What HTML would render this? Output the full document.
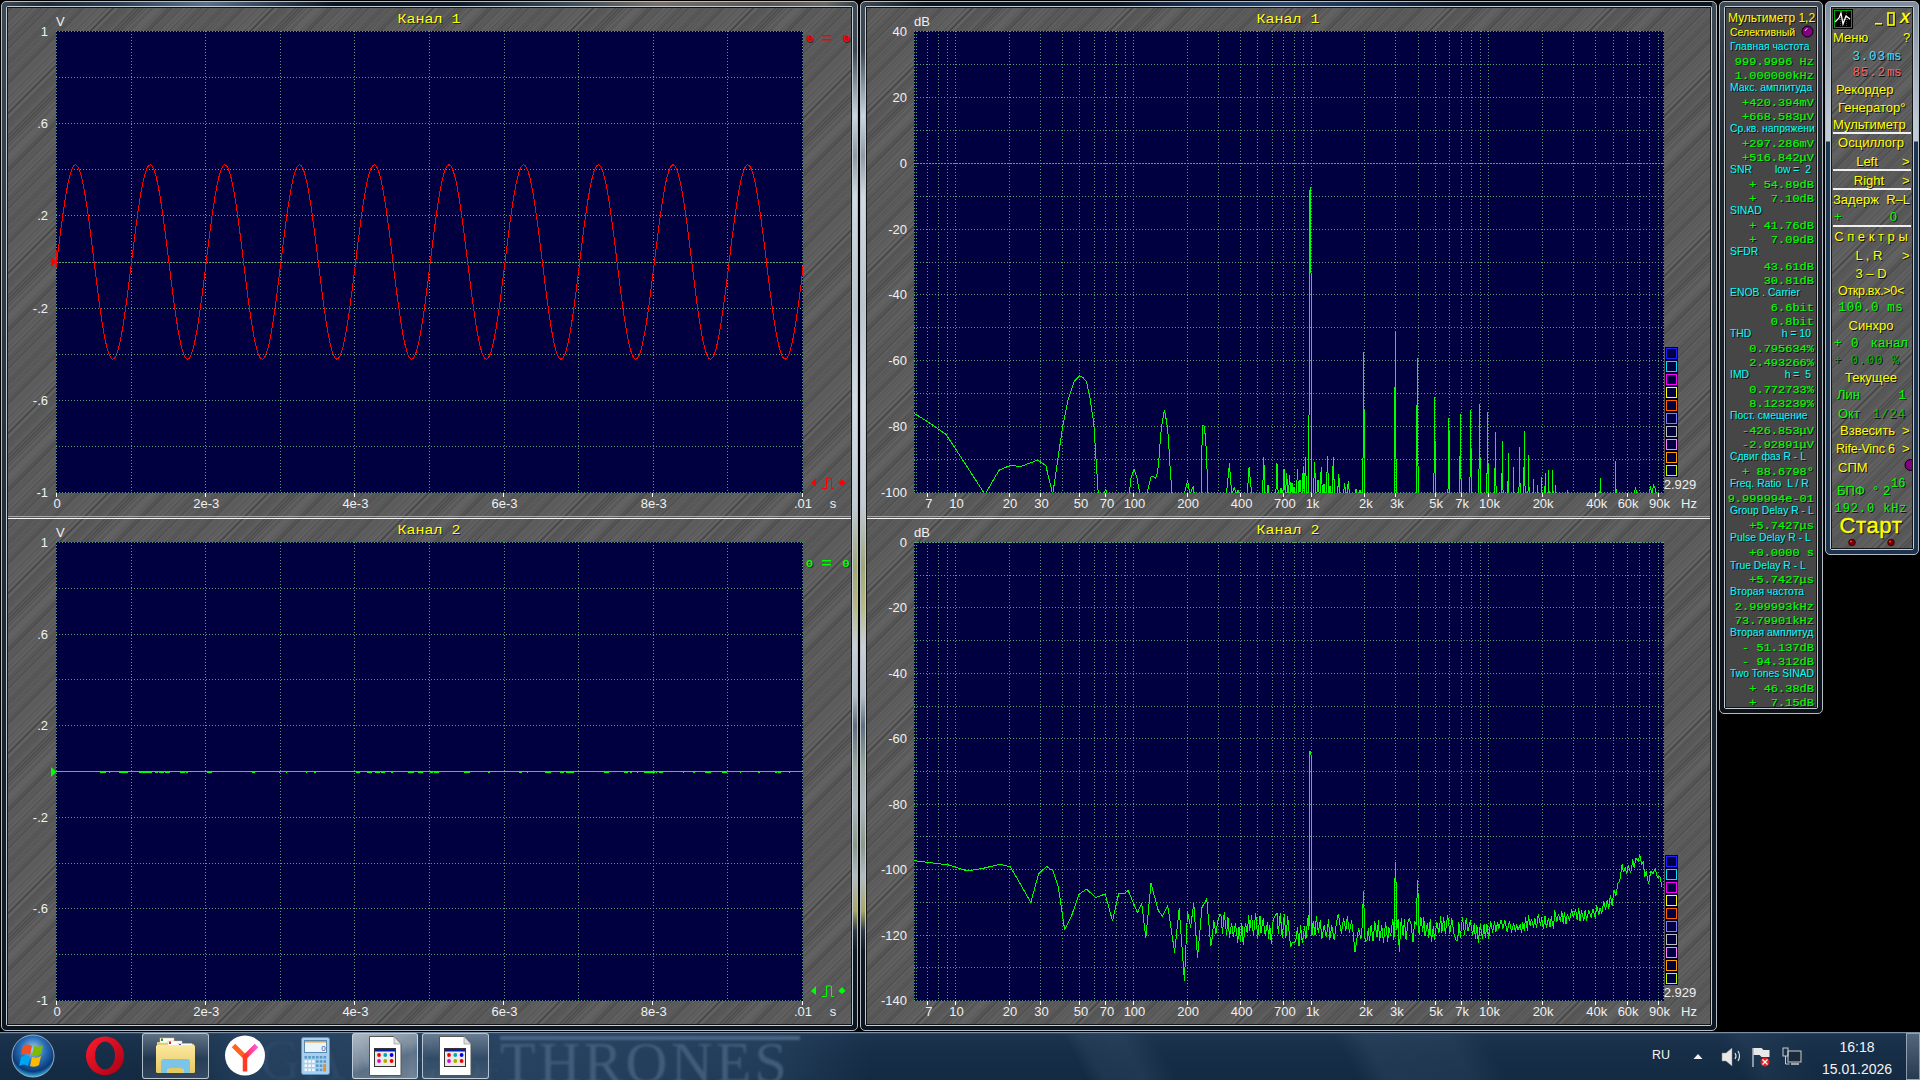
<!DOCTYPE html><html><head><meta charset="utf-8"><style>

*{margin:0;padding:0}
html,body{width:1920px;height:1080px;overflow:hidden;background:#000;position:relative}
.tex,.flat{position:absolute}
.tex{background-color:#5a5a5a;
background-image:
repeating-linear-gradient(135deg, rgba(0,0,0,.14) 0 1px, rgba(0,0,0,0) 1px 5px, rgba(255,255,255,.05) 5px 6px, rgba(0,0,0,0) 6px 11px, rgba(0,0,0,.09) 11px 12px, rgba(0,0,0,0) 12px 19px, rgba(255,255,255,.05) 19px 20px, rgba(0,0,0,0) 20px 23px, rgba(0,0,0,.06) 23px 24px, rgba(0,0,0,0) 24px 29px),
repeating-linear-gradient(135deg, rgba(0,0,0,.10) 0 1px, rgba(0,0,0,0) 1px 13px, rgba(0,0,0,.06) 13px 14px, rgba(0,0,0,0) 14px 31px, rgba(255,255,255,.04) 31px 32px, rgba(0,0,0,0) 32px 41px),
repeating-linear-gradient(135deg, rgba(0,0,0,.05) 0 1px, rgba(0,0,0,0) 1px 3px);}
.flat{background:#464646}
svg{position:absolute;left:0;top:0}
text{white-space:pre}

</style></head><body>
<svg width="0" height="0" style="position:absolute"><defs><pattern id="brush" x="0" y="0" width="160" height="160" patternUnits="userSpaceOnUse"><rect width="160" height="160" fill="#5b5b5b"/><line x1="0.0" y1="0" x2="0" y2="0.0" stroke="#000" stroke-opacity="0.111" stroke-width="1.2"/><line x1="160.0" y1="0" x2="0" y2="160.0" stroke="#000" stroke-opacity="0.111" stroke-width="1.2"/><line x1="2.2" y1="0" x2="0" y2="2.2" stroke="#000" stroke-opacity="0.119" stroke-width="1.0"/><line x1="162.2" y1="0" x2="0" y2="162.2" stroke="#000" stroke-opacity="0.119" stroke-width="1.0"/><line x1="3.8" y1="0" x2="0" y2="3.8" stroke="#000" stroke-opacity="0.169" stroke-width="1.2"/><line x1="163.8" y1="0" x2="0" y2="163.8" stroke="#000" stroke-opacity="0.169" stroke-width="1.2"/><line x1="6.0" y1="0" x2="0" y2="6.0" stroke="#fff" stroke-opacity="0.028" stroke-width="0.7"/><line x1="166.0" y1="0" x2="0" y2="166.0" stroke="#fff" stroke-opacity="0.028" stroke-width="0.7"/><line x1="9.2" y1="0" x2="0" y2="9.2" stroke="#000" stroke-opacity="0.136" stroke-width="0.5"/><line x1="169.2" y1="0" x2="0" y2="169.2" stroke="#000" stroke-opacity="0.136" stroke-width="0.5"/><line x1="10.5" y1="0" x2="0" y2="10.5" stroke="#fff" stroke-opacity="0.022" stroke-width="0.5"/><line x1="170.5" y1="0" x2="0" y2="170.5" stroke="#fff" stroke-opacity="0.022" stroke-width="0.5"/><line x1="13.7" y1="0" x2="0" y2="13.7" stroke="#000" stroke-opacity="0.117" stroke-width="1.0"/><line x1="173.7" y1="0" x2="0" y2="173.7" stroke="#000" stroke-opacity="0.117" stroke-width="1.0"/><line x1="16.5" y1="0" x2="0" y2="16.5" stroke="#fff" stroke-opacity="0.042" stroke-width="1.2"/><line x1="176.5" y1="0" x2="0" y2="176.5" stroke="#fff" stroke-opacity="0.042" stroke-width="1.2"/><line x1="18.6" y1="0" x2="0" y2="18.6" stroke="#fff" stroke-opacity="0.068" stroke-width="0.5"/><line x1="178.6" y1="0" x2="0" y2="178.6" stroke="#fff" stroke-opacity="0.068" stroke-width="0.5"/><line x1="19.6" y1="0" x2="0" y2="19.6" stroke="#000" stroke-opacity="0.074" stroke-width="0.9"/><line x1="179.6" y1="0" x2="0" y2="179.6" stroke="#000" stroke-opacity="0.074" stroke-width="0.9"/><line x1="21.6" y1="0" x2="0" y2="21.6" stroke="#fff" stroke-opacity="0.052" stroke-width="1.2"/><line x1="181.6" y1="0" x2="0" y2="181.6" stroke="#fff" stroke-opacity="0.052" stroke-width="1.2"/><line x1="24.1" y1="0" x2="0" y2="24.1" stroke="#000" stroke-opacity="0.158" stroke-width="0.5"/><line x1="184.1" y1="0" x2="0" y2="184.1" stroke="#000" stroke-opacity="0.158" stroke-width="0.5"/><line x1="27.3" y1="0" x2="0" y2="27.3" stroke="#fff" stroke-opacity="0.057" stroke-width="0.7"/><line x1="187.3" y1="0" x2="0" y2="187.3" stroke="#fff" stroke-opacity="0.057" stroke-width="0.7"/><line x1="30.1" y1="0" x2="0" y2="30.1" stroke="#000" stroke-opacity="0.110" stroke-width="0.5"/><line x1="190.1" y1="0" x2="0" y2="190.1" stroke="#000" stroke-opacity="0.110" stroke-width="0.5"/><line x1="32.9" y1="0" x2="0" y2="32.9" stroke="#000" stroke-opacity="0.148" stroke-width="0.9"/><line x1="192.9" y1="0" x2="0" y2="192.9" stroke="#000" stroke-opacity="0.148" stroke-width="0.9"/><line x1="34.2" y1="0" x2="0" y2="34.2" stroke="#000" stroke-opacity="0.123" stroke-width="0.9"/><line x1="194.2" y1="0" x2="0" y2="194.2" stroke="#000" stroke-opacity="0.123" stroke-width="0.9"/><line x1="37.2" y1="0" x2="0" y2="37.2" stroke="#000" stroke-opacity="0.060" stroke-width="1.0"/><line x1="197.2" y1="0" x2="0" y2="197.2" stroke="#000" stroke-opacity="0.060" stroke-width="1.0"/><line x1="40.5" y1="0" x2="0" y2="40.5" stroke="#000" stroke-opacity="0.272" stroke-width="0.9"/><line x1="200.5" y1="0" x2="0" y2="200.5" stroke="#000" stroke-opacity="0.272" stroke-width="0.9"/><line x1="42.9" y1="0" x2="0" y2="42.9" stroke="#fff" stroke-opacity="0.035" stroke-width="0.7"/><line x1="202.9" y1="0" x2="0" y2="202.9" stroke="#fff" stroke-opacity="0.035" stroke-width="0.7"/><line x1="46.5" y1="0" x2="0" y2="46.5" stroke="#000" stroke-opacity="0.050" stroke-width="0.5"/><line x1="206.5" y1="0" x2="0" y2="206.5" stroke="#000" stroke-opacity="0.050" stroke-width="0.5"/><line x1="49.9" y1="0" x2="0" y2="49.9" stroke="#fff" stroke-opacity="0.036" stroke-width="0.9"/><line x1="209.9" y1="0" x2="0" y2="209.9" stroke="#fff" stroke-opacity="0.036" stroke-width="0.9"/><line x1="51.3" y1="0" x2="0" y2="51.3" stroke="#000" stroke-opacity="0.153" stroke-width="0.7"/><line x1="211.3" y1="0" x2="0" y2="211.3" stroke="#000" stroke-opacity="0.153" stroke-width="0.7"/><line x1="54.6" y1="0" x2="0" y2="54.6" stroke="#000" stroke-opacity="0.100" stroke-width="1.2"/><line x1="214.6" y1="0" x2="0" y2="214.6" stroke="#000" stroke-opacity="0.100" stroke-width="1.2"/><line x1="57.3" y1="0" x2="0" y2="57.3" stroke="#000" stroke-opacity="0.166" stroke-width="0.9"/><line x1="217.3" y1="0" x2="0" y2="217.3" stroke="#000" stroke-opacity="0.166" stroke-width="0.9"/><line x1="59.4" y1="0" x2="0" y2="59.4" stroke="#fff" stroke-opacity="0.033" stroke-width="0.9"/><line x1="219.4" y1="0" x2="0" y2="219.4" stroke="#fff" stroke-opacity="0.033" stroke-width="0.9"/><line x1="61.5" y1="0" x2="0" y2="61.5" stroke="#000" stroke-opacity="0.079" stroke-width="1.0"/><line x1="221.5" y1="0" x2="0" y2="221.5" stroke="#000" stroke-opacity="0.079" stroke-width="1.0"/><line x1="65.0" y1="0" x2="0" y2="65.0" stroke="#000" stroke-opacity="0.089" stroke-width="0.7"/><line x1="225.0" y1="0" x2="0" y2="225.0" stroke="#000" stroke-opacity="0.089" stroke-width="0.7"/><line x1="66.1" y1="0" x2="0" y2="66.1" stroke="#fff" stroke-opacity="0.046" stroke-width="0.9"/><line x1="226.1" y1="0" x2="0" y2="226.1" stroke="#fff" stroke-opacity="0.046" stroke-width="0.9"/><line x1="68.6" y1="0" x2="0" y2="68.6" stroke="#000" stroke-opacity="0.104" stroke-width="0.5"/><line x1="228.6" y1="0" x2="0" y2="228.6" stroke="#000" stroke-opacity="0.104" stroke-width="0.5"/><line x1="72.1" y1="0" x2="0" y2="72.1" stroke="#000" stroke-opacity="0.099" stroke-width="0.9"/><line x1="232.1" y1="0" x2="0" y2="232.1" stroke="#000" stroke-opacity="0.099" stroke-width="0.9"/><line x1="73.5" y1="0" x2="0" y2="73.5" stroke="#000" stroke-opacity="0.139" stroke-width="0.9"/><line x1="233.5" y1="0" x2="0" y2="233.5" stroke="#000" stroke-opacity="0.139" stroke-width="0.9"/><line x1="75.2" y1="0" x2="0" y2="75.2" stroke="#000" stroke-opacity="0.257" stroke-width="0.7"/><line x1="235.2" y1="0" x2="0" y2="235.2" stroke="#000" stroke-opacity="0.257" stroke-width="0.7"/><line x1="77.0" y1="0" x2="0" y2="77.0" stroke="#000" stroke-opacity="0.144" stroke-width="0.7"/><line x1="237.0" y1="0" x2="0" y2="237.0" stroke="#000" stroke-opacity="0.144" stroke-width="0.7"/><line x1="79.7" y1="0" x2="0" y2="79.7" stroke="#fff" stroke-opacity="0.025" stroke-width="1.2"/><line x1="239.7" y1="0" x2="0" y2="239.7" stroke="#fff" stroke-opacity="0.025" stroke-width="1.2"/><line x1="81.5" y1="0" x2="0" y2="81.5" stroke="#000" stroke-opacity="0.148" stroke-width="0.7"/><line x1="241.5" y1="0" x2="0" y2="241.5" stroke="#000" stroke-opacity="0.148" stroke-width="0.7"/><line x1="82.6" y1="0" x2="0" y2="82.6" stroke="#fff" stroke-opacity="0.032" stroke-width="1.2"/><line x1="242.6" y1="0" x2="0" y2="242.6" stroke="#fff" stroke-opacity="0.032" stroke-width="1.2"/><line x1="84.7" y1="0" x2="0" y2="84.7" stroke="#000" stroke-opacity="0.056" stroke-width="0.7"/><line x1="244.7" y1="0" x2="0" y2="244.7" stroke="#000" stroke-opacity="0.056" stroke-width="0.7"/><line x1="86.4" y1="0" x2="0" y2="86.4" stroke="#fff" stroke-opacity="0.052" stroke-width="0.9"/><line x1="246.4" y1="0" x2="0" y2="246.4" stroke="#fff" stroke-opacity="0.052" stroke-width="0.9"/><line x1="88.3" y1="0" x2="0" y2="88.3" stroke="#fff" stroke-opacity="0.025" stroke-width="1.2"/><line x1="248.3" y1="0" x2="0" y2="248.3" stroke="#fff" stroke-opacity="0.025" stroke-width="1.2"/><line x1="90.1" y1="0" x2="0" y2="90.1" stroke="#000" stroke-opacity="0.078" stroke-width="0.9"/><line x1="250.1" y1="0" x2="0" y2="250.1" stroke="#000" stroke-opacity="0.078" stroke-width="0.9"/><line x1="92.2" y1="0" x2="0" y2="92.2" stroke="#fff" stroke-opacity="0.036" stroke-width="1.2"/><line x1="252.2" y1="0" x2="0" y2="252.2" stroke="#fff" stroke-opacity="0.036" stroke-width="1.2"/><line x1="94.3" y1="0" x2="0" y2="94.3" stroke="#fff" stroke-opacity="0.029" stroke-width="0.5"/><line x1="254.3" y1="0" x2="0" y2="254.3" stroke="#fff" stroke-opacity="0.029" stroke-width="0.5"/><line x1="96.4" y1="0" x2="0" y2="96.4" stroke="#fff" stroke-opacity="0.054" stroke-width="1.2"/><line x1="256.4" y1="0" x2="0" y2="256.4" stroke="#fff" stroke-opacity="0.054" stroke-width="1.2"/><line x1="98.5" y1="0" x2="0" y2="98.5" stroke="#fff" stroke-opacity="0.071" stroke-width="0.7"/><line x1="258.5" y1="0" x2="0" y2="258.5" stroke="#fff" stroke-opacity="0.071" stroke-width="0.7"/><line x1="99.5" y1="0" x2="0" y2="99.5" stroke="#000" stroke-opacity="0.138" stroke-width="0.9"/><line x1="259.5" y1="0" x2="0" y2="259.5" stroke="#000" stroke-opacity="0.138" stroke-width="0.9"/><line x1="101.9" y1="0" x2="0" y2="101.9" stroke="#fff" stroke-opacity="0.067" stroke-width="1.2"/><line x1="261.9" y1="0" x2="0" y2="261.9" stroke="#fff" stroke-opacity="0.067" stroke-width="1.2"/><line x1="105.4" y1="0" x2="0" y2="105.4" stroke="#000" stroke-opacity="0.280" stroke-width="1.2"/><line x1="265.4" y1="0" x2="0" y2="265.4" stroke="#000" stroke-opacity="0.280" stroke-width="1.2"/><line x1="108.8" y1="0" x2="0" y2="108.8" stroke="#fff" stroke-opacity="0.069" stroke-width="1.2"/><line x1="268.8" y1="0" x2="0" y2="268.8" stroke="#fff" stroke-opacity="0.069" stroke-width="1.2"/><line x1="109.8" y1="0" x2="0" y2="109.8" stroke="#000" stroke-opacity="0.056" stroke-width="0.7"/><line x1="269.8" y1="0" x2="0" y2="269.8" stroke="#000" stroke-opacity="0.056" stroke-width="0.7"/><line x1="112.5" y1="0" x2="0" y2="112.5" stroke="#000" stroke-opacity="0.094" stroke-width="1.2"/><line x1="272.5" y1="0" x2="0" y2="272.5" stroke="#000" stroke-opacity="0.094" stroke-width="1.2"/><line x1="113.7" y1="0" x2="0" y2="113.7" stroke="#000" stroke-opacity="0.166" stroke-width="0.5"/><line x1="273.7" y1="0" x2="0" y2="273.7" stroke="#000" stroke-opacity="0.166" stroke-width="0.5"/><line x1="115.6" y1="0" x2="0" y2="115.6" stroke="#000" stroke-opacity="0.110" stroke-width="0.7"/><line x1="275.6" y1="0" x2="0" y2="275.6" stroke="#000" stroke-opacity="0.110" stroke-width="0.7"/><line x1="117.1" y1="0" x2="0" y2="117.1" stroke="#000" stroke-opacity="0.156" stroke-width="0.5"/><line x1="277.1" y1="0" x2="0" y2="277.1" stroke="#000" stroke-opacity="0.156" stroke-width="0.5"/><line x1="119.3" y1="0" x2="0" y2="119.3" stroke="#000" stroke-opacity="0.092" stroke-width="0.7"/><line x1="279.3" y1="0" x2="0" y2="279.3" stroke="#000" stroke-opacity="0.092" stroke-width="0.7"/><line x1="121.0" y1="0" x2="0" y2="121.0" stroke="#000" stroke-opacity="0.095" stroke-width="0.5"/><line x1="281.0" y1="0" x2="0" y2="281.0" stroke="#000" stroke-opacity="0.095" stroke-width="0.5"/><line x1="124.2" y1="0" x2="0" y2="124.2" stroke="#fff" stroke-opacity="0.023" stroke-width="0.5"/><line x1="284.2" y1="0" x2="0" y2="284.2" stroke="#fff" stroke-opacity="0.023" stroke-width="0.5"/><line x1="125.3" y1="0" x2="0" y2="125.3" stroke="#fff" stroke-opacity="0.067" stroke-width="0.5"/><line x1="285.3" y1="0" x2="0" y2="285.3" stroke="#fff" stroke-opacity="0.067" stroke-width="0.5"/><line x1="127.5" y1="0" x2="0" y2="127.5" stroke="#000" stroke-opacity="0.239" stroke-width="1.0"/><line x1="287.5" y1="0" x2="0" y2="287.5" stroke="#000" stroke-opacity="0.239" stroke-width="1.0"/><line x1="130.0" y1="0" x2="0" y2="130.0" stroke="#000" stroke-opacity="0.065" stroke-width="0.5"/><line x1="290.0" y1="0" x2="0" y2="290.0" stroke="#000" stroke-opacity="0.065" stroke-width="0.5"/><line x1="131.3" y1="0" x2="0" y2="131.3" stroke="#000" stroke-opacity="0.134" stroke-width="1.2"/><line x1="291.3" y1="0" x2="0" y2="291.3" stroke="#000" stroke-opacity="0.134" stroke-width="1.2"/><line x1="132.7" y1="0" x2="0" y2="132.7" stroke="#000" stroke-opacity="0.119" stroke-width="1.0"/><line x1="292.7" y1="0" x2="0" y2="292.7" stroke="#000" stroke-opacity="0.119" stroke-width="1.0"/><line x1="135.3" y1="0" x2="0" y2="135.3" stroke="#000" stroke-opacity="0.263" stroke-width="0.9"/><line x1="295.3" y1="0" x2="0" y2="295.3" stroke="#000" stroke-opacity="0.263" stroke-width="0.9"/><line x1="137.3" y1="0" x2="0" y2="137.3" stroke="#fff" stroke-opacity="0.045" stroke-width="0.7"/><line x1="297.3" y1="0" x2="0" y2="297.3" stroke="#fff" stroke-opacity="0.045" stroke-width="0.7"/><line x1="138.8" y1="0" x2="0" y2="138.8" stroke="#000" stroke-opacity="0.117" stroke-width="0.7"/><line x1="298.8" y1="0" x2="0" y2="298.8" stroke="#000" stroke-opacity="0.117" stroke-width="0.7"/><line x1="140.9" y1="0" x2="0" y2="140.9" stroke="#fff" stroke-opacity="0.072" stroke-width="0.9"/><line x1="300.9" y1="0" x2="0" y2="300.9" stroke="#fff" stroke-opacity="0.072" stroke-width="0.9"/><line x1="144.4" y1="0" x2="0" y2="144.4" stroke="#000" stroke-opacity="0.153" stroke-width="0.5"/><line x1="304.4" y1="0" x2="0" y2="304.4" stroke="#000" stroke-opacity="0.153" stroke-width="0.5"/><line x1="147.8" y1="0" x2="0" y2="147.8" stroke="#fff" stroke-opacity="0.067" stroke-width="1.2"/><line x1="307.8" y1="0" x2="0" y2="307.8" stroke="#fff" stroke-opacity="0.067" stroke-width="1.2"/><line x1="150.8" y1="0" x2="0" y2="150.8" stroke="#fff" stroke-opacity="0.060" stroke-width="1.2"/><line x1="310.8" y1="0" x2="0" y2="310.8" stroke="#fff" stroke-opacity="0.060" stroke-width="1.2"/><line x1="153.2" y1="0" x2="0" y2="153.2" stroke="#fff" stroke-opacity="0.059" stroke-width="1.0"/><line x1="313.2" y1="0" x2="0" y2="313.2" stroke="#fff" stroke-opacity="0.059" stroke-width="1.0"/><line x1="154.5" y1="0" x2="0" y2="154.5" stroke="#fff" stroke-opacity="0.022" stroke-width="0.5"/><line x1="314.5" y1="0" x2="0" y2="314.5" stroke="#fff" stroke-opacity="0.022" stroke-width="0.5"/><line x1="156.9" y1="0" x2="0" y2="156.9" stroke="#fff" stroke-opacity="0.041" stroke-width="0.5"/><line x1="316.9" y1="0" x2="0" y2="316.9" stroke="#fff" stroke-opacity="0.041" stroke-width="0.5"/><line x1="158.7" y1="0" x2="0" y2="158.7" stroke="#fff" stroke-opacity="0.021" stroke-width="0.5"/><line x1="318.7" y1="0" x2="0" y2="318.7" stroke="#fff" stroke-opacity="0.021" stroke-width="0.5"/></pattern></defs></svg>
<div style="position:absolute;left:1px;top:1px;width:857px;height:1030px;box-sizing:border-box;border:1px solid #b4bcc4;border-radius:5px;background:linear-gradient(180deg,#3c4854,#0c1622)"></div>
<div style="position:absolute;left:6px;top:6px;width:847px;height:1020px;box-sizing:border-box;border:1px solid #c4ccd4;border-radius:2px"></div>
<div style="position:absolute;left:7px;top:7px;width:845px;height:1018px;box-sizing:border-box;border:1px solid #141414;"></div>
<svg style="position:absolute;left:8px;top:8px" width="843" height="1016"><rect width="843" height="1016" fill="url(#brush)"/></svg>
<div style="position:absolute;left:860px;top:1px;width:857px;height:1030px;box-sizing:border-box;border:1px solid #b4bcc4;border-radius:5px;background:linear-gradient(180deg,#3c4854,#0c1622)"></div>
<div style="position:absolute;left:865px;top:6px;width:847px;height:1020px;box-sizing:border-box;border:1px solid #c4ccd4;border-radius:2px"></div>
<div style="position:absolute;left:866px;top:7px;width:845px;height:1018px;box-sizing:border-box;border:1px solid #141414;"></div>
<svg style="position:absolute;left:867px;top:8px" width="843" height="1016"><rect width="843" height="1016" fill="url(#brush)"/></svg>
<div style="position:absolute;left:1719px;top:1px;width:104px;height:713px;box-sizing:border-box;border:1px solid #b4bcc4;border-radius:5px;background:linear-gradient(180deg,#3c4854 0px,#2c3642 60px,#1e2630 150px,#161c24 400px,#0c1218 100%)"></div>
<div style="position:absolute;left:1724px;top:6px;width:94px;height:703px;box-sizing:border-box;border:1px solid #c4ccd4;border-radius:2px"></div>
<div style="position:absolute;left:1725px;top:7px;width:92px;height:701px;box-sizing:border-box;border:1px solid #141414;"></div>
<div class="flat" style="left:1726px;top:8px;width:90px;height:699px"></div>
<div style="position:absolute;left:1825px;top:1px;width:94px;height:554px;box-sizing:border-box;border:1px solid #b4bcc4;border-radius:5px;background:linear-gradient(180deg,#7c8c9c 0px,#9aa8b6 50px,#bcc8d4 120px,#c0ccd8 139px,#1e3652 140px,#1c3450 100%)"></div>
<div style="position:absolute;left:1830px;top:6px;width:84px;height:544px;box-sizing:border-box;border:1px solid #c4ccd4;border-radius:2px"></div>
<div style="position:absolute;left:1831px;top:7px;width:82px;height:542px;box-sizing:border-box;border:1px solid #141414;"></div>
<svg style="position:absolute;left:1832px;top:8px" width="80" height="540"><rect width="80" height="540" fill="url(#brush)"/></svg>
<div style="position:absolute;left:6px;top:2px;width:847px;height:4px;background:linear-gradient(90deg,#3a4550 0px,#1e2a36 40px,#2a3c50 110px,#5a7088 200px,#2a3c50 270px,#0a1420 330px,#0c1826 450px,#3a4a58 560px,#7a6e64 650px,#5a5450 760px,#6a6660 820px,#3a4550 847px)"></div>
<div style="position:absolute;left:865px;top:2px;width:847px;height:4px;background:linear-gradient(90deg,#3a4550 0px,#0c1622 60px,#0a1420 250px,#1a3050 330px,#28426a 420px,#1a3050 500px,#0a1420 600px,#0c1622 847px)"></div>
<div style="position:absolute;left:853px;top:6px;width:4px;height:1020px;background:linear-gradient(180deg,#3c4854 0px,#3c4854 45px,#8a98a6 80px,#c8d6e4 110px,#8e9aa6 150px,#d0dae4 190px,#b8c4ce 300px,#d4dde6 400px,#c0cad4 500px,#a0a878 560px,#b8b880 600px,#c8d0d8 640px,#b0bcc8 690px,#607080 720px,#98a8a0 760px,#aab6be 800px,#8a9a88 840px,#b0bcc4 870px,#a8a860 905px,#2a3848 925px,#101a26 945px,#0c1622 1030px)"></div>
<div style="position:absolute;left:861px;top:6px;width:4px;height:1020px;background:linear-gradient(180deg,#3c4854 0px,#3c4854 45px,#8a98a6 80px,#c8d6e4 110px,#8e9aa6 150px,#d0dae4 190px,#b8c4ce 300px,#d4dde6 400px,#c0cad4 500px,#a0a878 560px,#b8b880 600px,#c8d0d8 640px,#b0bcc8 690px,#607080 720px,#98a8a0 760px,#aab6be 800px,#8a9a88 840px,#b0bcc4 870px,#a8a860 905px,#2a3848 925px,#101a26 945px,#0c1622 1030px)"></div>
<div style="position:absolute;left:8px;top:516px;width:843px;height:1px;background:#a8a8a8"></div>
<div style="position:absolute;left:8px;top:518px;width:843px;height:1px;background:#f4f4f4"></div>
<div style="position:absolute;left:867px;top:516px;width:843px;height:1px;background:#a8a8a8"></div>
<div style="position:absolute;left:867px;top:518px;width:843px;height:1px;background:#f4f4f4"></div>
<div style="position:absolute;left:0;top:1032px;width:1920px;height:48px;background:linear-gradient(180deg,#1c344e 0%,#172e48 40%,#132a42 100%)"></div>
<div style="position:absolute;left:0;top:1034px;width:1920px;height:46px;background:linear-gradient(62deg,rgba(255,255,255,0) 0px,rgba(255,255,255,0) 960px,rgba(120,150,180,.10) 975px,rgba(120,150,180,.12) 1010px,rgba(255,255,255,0) 1040px,rgba(255,255,255,0) 1200px,rgba(120,150,180,.12) 1225px,rgba(120,150,180,.10) 1300px,rgba(255,255,255,0) 1330px,rgba(255,255,255,0) 1540px,rgba(120,150,180,.08) 1560px,rgba(255,255,255,0) 1610px)"></div>
<div style="position:absolute;left:0;top:1032px;width:1920px;height:1px;background:#7a8ea4"></div>
<div style="position:absolute;left:0;top:1033px;width:1920px;height:1px;background:#34485e"></div>
<div style="position:absolute;left:170px;top:1034px;width:700px;height:46px;background:linear-gradient(90deg,rgba(50,80,112,0) 0%,rgba(50,80,112,.55) 12%,rgba(50,80,112,.6) 50%,rgba(50,80,112,.45) 85%,rgba(50,80,112,0) 100%)"></div>
<div style="position:absolute;left:500px;top:1036px;width:300px;height:4px;background:#4a6684;filter:blur(1px)"></div>
<div style="position:absolute;left:190px;top:1034px;width:640px;height:46px;overflow:hidden;"><div style="position:absolute;left:310px;top:0px;font-family:'Liberation Serif',serif;font-size:58px;line-height:58px;color:#46627f;letter-spacing:3.2px;white-space:nowrap;filter:blur(0.8px);opacity:.85">THRONES</div><div style="position:absolute;left:70px;top:-2px;font-family:'Liberation Serif',serif;font-size:56px;line-height:56px;color:#2c4866;letter-spacing:4px;white-space:nowrap;filter:blur(0.9px)">GAME <span style="font-size:30px">OF</span></div></div>
<div style="position:absolute;left:142px;top:1033px;width:67px;height:46px;box-sizing:border-box;border:1px solid rgba(220,230,240,.75);border-radius:3px;background:linear-gradient(180deg,rgba(255,255,255,.30),rgba(255,255,255,.10) 45%,rgba(255,255,255,.05) 55%,rgba(255,255,255,.12))"></div>
<div style="position:absolute;left:352px;top:1033px;width:66px;height:46px;box-sizing:border-box;border:1px solid rgba(220,230,240,.75);border-radius:3px;background:linear-gradient(160deg,rgba(255,255,255,.62),rgba(255,255,255,.40) 45%,rgba(255,255,255,.25) 60%,rgba(255,255,255,.35))"></div>
<div style="position:absolute;left:422px;top:1033px;width:67px;height:46px;box-sizing:border-box;border:1px solid rgba(220,230,240,.75);border-radius:3px;background:linear-gradient(180deg,rgba(255,255,255,.30),rgba(255,255,255,.10) 45%,rgba(255,255,255,.05) 55%,rgba(255,255,255,.12))"></div>
<div style="position:absolute;left:1906px;top:1033px;width:14px;height:47px;box-sizing:border-box;border:1px solid rgba(200,210,220,.6);background:linear-gradient(180deg,rgba(255,255,255,.25),rgba(255,255,255,.08))"></div>
<svg width="1920" height="1080" viewBox="0 0 1920 1080">
<rect x="56" y="31" width="747" height="462" fill="#000040"/>
<line x1="56.5" y1="31" x2="56.5" y2="493" stroke="#58a074" stroke-width="1" stroke-dasharray="1 2"/>
<line x1="131.5" y1="31" x2="131.5" y2="493" stroke="#58a074" stroke-width="1" stroke-dasharray="1 2"/>
<line x1="205.5" y1="31" x2="205.5" y2="493" stroke="#58a074" stroke-width="1" stroke-dasharray="1 2"/>
<line x1="280.5" y1="31" x2="280.5" y2="493" stroke="#58a074" stroke-width="1" stroke-dasharray="1 2"/>
<line x1="354.5" y1="31" x2="354.5" y2="493" stroke="#58a074" stroke-width="1" stroke-dasharray="1 2"/>
<line x1="429.5" y1="31" x2="429.5" y2="493" stroke="#58a074" stroke-width="1" stroke-dasharray="1 2"/>
<line x1="504.5" y1="31" x2="504.5" y2="493" stroke="#58a074" stroke-width="1" stroke-dasharray="1 2"/>
<line x1="578.5" y1="31" x2="578.5" y2="493" stroke="#58a074" stroke-width="1" stroke-dasharray="1 2"/>
<line x1="653.5" y1="31" x2="653.5" y2="493" stroke="#58a074" stroke-width="1" stroke-dasharray="1 2"/>
<line x1="727.5" y1="31" x2="727.5" y2="493" stroke="#58a074" stroke-width="1" stroke-dasharray="1 2"/>
<line x1="802.5" y1="31" x2="802.5" y2="493" stroke="#58a074" stroke-width="1" stroke-dasharray="1 2"/>
<line x1="56" y1="31.5" x2="803" y2="31.5" stroke="#58a074" stroke-width="1" stroke-dasharray="1 2"/>
<line x1="56" y1="77.5" x2="803" y2="77.5" stroke="#58a074" stroke-width="1" stroke-dasharray="1 2"/>
<line x1="56" y1="123.5" x2="803" y2="123.5" stroke="#58a074" stroke-width="1" stroke-dasharray="1 2"/>
<line x1="56" y1="169.5" x2="803" y2="169.5" stroke="#58a074" stroke-width="1" stroke-dasharray="1 2"/>
<line x1="56" y1="215.5" x2="803" y2="215.5" stroke="#58a074" stroke-width="1" stroke-dasharray="1 2"/>
<line x1="56" y1="262.5" x2="803" y2="262.5" stroke="#58a074" stroke-width="1" stroke-dasharray="2 1"/>
<line x1="56" y1="308.5" x2="803" y2="308.5" stroke="#58a074" stroke-width="1" stroke-dasharray="1 2"/>
<line x1="56" y1="354.5" x2="803" y2="354.5" stroke="#58a074" stroke-width="1" stroke-dasharray="1 2"/>
<line x1="56" y1="400.5" x2="803" y2="400.5" stroke="#58a074" stroke-width="1" stroke-dasharray="1 2"/>
<line x1="56" y1="446.5" x2="803" y2="446.5" stroke="#58a074" stroke-width="1" stroke-dasharray="1 2"/>
<line x1="56" y1="492.5" x2="803" y2="492.5" stroke="#58a074" stroke-width="1" stroke-dasharray="1 2"/>
<text x="48.00" y="36.00" text-anchor="end" style="font-family:'Liberation Sans', sans-serif;font-size:13px;font-weight:normal" fill="#f0f0f0" >1</text>
<text x="48.00" y="128.00" text-anchor="end" style="font-family:'Liberation Sans', sans-serif;font-size:13px;font-weight:normal" fill="#f0f0f0" >.6</text>
<text x="48.00" y="220.00" text-anchor="end" style="font-family:'Liberation Sans', sans-serif;font-size:13px;font-weight:normal" fill="#f0f0f0" >.2</text>
<text x="48.00" y="313.00" text-anchor="end" style="font-family:'Liberation Sans', sans-serif;font-size:13px;font-weight:normal" fill="#f0f0f0" >-.2</text>
<text x="48.00" y="405.00" text-anchor="end" style="font-family:'Liberation Sans', sans-serif;font-size:13px;font-weight:normal" fill="#f0f0f0" >-.6</text>
<text x="48.00" y="497.00" text-anchor="end" style="font-family:'Liberation Sans', sans-serif;font-size:13px;font-weight:normal" fill="#f0f0f0" >-1</text>
<text x="56.00" y="26.00" text-anchor="start" style="font-family:'Liberation Sans', sans-serif;font-size:13px;font-weight:normal" fill="#f0f0f0" >V</text>
<rect x="56" y="493" width="1" height="4" fill="#ffffff"/>
<text x="57.00" y="508.00" text-anchor="middle" style="font-family:'Liberation Sans', sans-serif;font-size:13px;font-weight:normal" fill="#f0f0f0" >0</text>
<rect x="205" y="493" width="1" height="4" fill="#ffffff"/>
<text x="206.20" y="508.00" text-anchor="middle" style="font-family:'Liberation Sans', sans-serif;font-size:13px;font-weight:normal" fill="#f0f0f0" >2e-3</text>
<rect x="354" y="493" width="1" height="4" fill="#ffffff"/>
<text x="355.40" y="508.00" text-anchor="middle" style="font-family:'Liberation Sans', sans-serif;font-size:13px;font-weight:normal" fill="#f0f0f0" >4e-3</text>
<rect x="503" y="493" width="1" height="4" fill="#ffffff"/>
<text x="504.60" y="508.00" text-anchor="middle" style="font-family:'Liberation Sans', sans-serif;font-size:13px;font-weight:normal" fill="#f0f0f0" >6e-3</text>
<rect x="652" y="493" width="1" height="4" fill="#ffffff"/>
<text x="653.80" y="508.00" text-anchor="middle" style="font-family:'Liberation Sans', sans-serif;font-size:13px;font-weight:normal" fill="#f0f0f0" >8e-3</text>
<rect x="802" y="493" width="1" height="4" fill="#ffffff"/>
<text x="803.00" y="508.00" text-anchor="middle" style="font-family:'Liberation Sans', sans-serif;font-size:13px;font-weight:normal" fill="#f0f0f0" >.01</text>
<text x="833.00" y="508.00" text-anchor="middle" style="font-family:'Liberation Sans', sans-serif;font-size:13px;font-weight:normal" fill="#f0f0f0" >s</text>
<text x="0" y="0" transform="translate(430.00,24.00) scale(1,0.85)" text-anchor="middle" style="font-family:'Liberation Mono', monospace;font-size:15px;font-weight:normal" fill="#202040" >Канал 1</text>
<text x="0" y="0" transform="translate(429.00,23.00) scale(1,0.85)" text-anchor="middle" style="font-family:'Liberation Mono', monospace;font-size:15px;font-weight:normal" fill="#ffff00" >Канал 1</text>
<text x="0" y="0" transform="translate(810.50,43.00) scale(1,0.92)" text-anchor="middle" style="font-family:'Liberation Mono', monospace;font-size:12.5px;font-weight:bold" fill="#402030" >0</text>
<text x="0" y="0" transform="translate(809.50,42.00) scale(1,0.92)" text-anchor="middle" style="font-family:'Liberation Mono', monospace;font-size:12.5px;font-weight:bold" fill="#ff0000" >0</text>
<rect x="822" y="35" width="9" height="1.4" fill="#ff0000"/><rect x="822" y="39" width="9" height="1.4" fill="#ff0000"/>
<text x="0" y="0" transform="translate(847.00,43.00) scale(1,0.92)" text-anchor="middle" style="font-family:'Liberation Mono', monospace;font-size:12.5px;font-weight:bold" fill="#402030" >0</text>
<text x="0" y="0" transform="translate(846.00,42.00) scale(1,0.92)" text-anchor="middle" style="font-family:'Liberation Mono', monospace;font-size:12.5px;font-weight:bold" fill="#ff0000" >0</text>
<rect x="56" y="542" width="747" height="459" fill="#000040"/>
<line x1="56.5" y1="542" x2="56.5" y2="1001" stroke="#58a074" stroke-width="1" stroke-dasharray="1 2"/>
<line x1="131.5" y1="542" x2="131.5" y2="1001" stroke="#58a074" stroke-width="1" stroke-dasharray="1 2"/>
<line x1="205.5" y1="542" x2="205.5" y2="1001" stroke="#58a074" stroke-width="1" stroke-dasharray="1 2"/>
<line x1="280.5" y1="542" x2="280.5" y2="1001" stroke="#58a074" stroke-width="1" stroke-dasharray="1 2"/>
<line x1="354.5" y1="542" x2="354.5" y2="1001" stroke="#58a074" stroke-width="1" stroke-dasharray="1 2"/>
<line x1="429.5" y1="542" x2="429.5" y2="1001" stroke="#58a074" stroke-width="1" stroke-dasharray="1 2"/>
<line x1="504.5" y1="542" x2="504.5" y2="1001" stroke="#58a074" stroke-width="1" stroke-dasharray="1 2"/>
<line x1="578.5" y1="542" x2="578.5" y2="1001" stroke="#58a074" stroke-width="1" stroke-dasharray="1 2"/>
<line x1="653.5" y1="542" x2="653.5" y2="1001" stroke="#58a074" stroke-width="1" stroke-dasharray="1 2"/>
<line x1="727.5" y1="542" x2="727.5" y2="1001" stroke="#58a074" stroke-width="1" stroke-dasharray="1 2"/>
<line x1="802.5" y1="542" x2="802.5" y2="1001" stroke="#58a074" stroke-width="1" stroke-dasharray="1 2"/>
<line x1="56" y1="542.5" x2="803" y2="542.5" stroke="#58a074" stroke-width="1" stroke-dasharray="1 2"/>
<line x1="56" y1="588.5" x2="803" y2="588.5" stroke="#58a074" stroke-width="1" stroke-dasharray="1 2"/>
<line x1="56" y1="634.5" x2="803" y2="634.5" stroke="#58a074" stroke-width="1" stroke-dasharray="1 2"/>
<line x1="56" y1="679.5" x2="803" y2="679.5" stroke="#58a074" stroke-width="1" stroke-dasharray="1 2"/>
<line x1="56" y1="725.5" x2="803" y2="725.5" stroke="#58a074" stroke-width="1" stroke-dasharray="1 2"/>
<line x1="56" y1="771.5" x2="803" y2="771.5" stroke="#58a074" stroke-width="1" stroke-dasharray="2 1"/>
<line x1="56" y1="817.5" x2="803" y2="817.5" stroke="#58a074" stroke-width="1" stroke-dasharray="1 2"/>
<line x1="56" y1="863.5" x2="803" y2="863.5" stroke="#58a074" stroke-width="1" stroke-dasharray="1 2"/>
<line x1="56" y1="908.5" x2="803" y2="908.5" stroke="#58a074" stroke-width="1" stroke-dasharray="1 2"/>
<line x1="56" y1="954.5" x2="803" y2="954.5" stroke="#58a074" stroke-width="1" stroke-dasharray="1 2"/>
<line x1="56" y1="1000.5" x2="803" y2="1000.5" stroke="#58a074" stroke-width="1" stroke-dasharray="1 2"/>
<text x="48.00" y="547.00" text-anchor="end" style="font-family:'Liberation Sans', sans-serif;font-size:13px;font-weight:normal" fill="#f0f0f0" >1</text>
<text x="48.00" y="639.00" text-anchor="end" style="font-family:'Liberation Sans', sans-serif;font-size:13px;font-weight:normal" fill="#f0f0f0" >.6</text>
<text x="48.00" y="730.00" text-anchor="end" style="font-family:'Liberation Sans', sans-serif;font-size:13px;font-weight:normal" fill="#f0f0f0" >.2</text>
<text x="48.00" y="822.00" text-anchor="end" style="font-family:'Liberation Sans', sans-serif;font-size:13px;font-weight:normal" fill="#f0f0f0" >-.2</text>
<text x="48.00" y="913.00" text-anchor="end" style="font-family:'Liberation Sans', sans-serif;font-size:13px;font-weight:normal" fill="#f0f0f0" >-.6</text>
<text x="48.00" y="1005.00" text-anchor="end" style="font-family:'Liberation Sans', sans-serif;font-size:13px;font-weight:normal" fill="#f0f0f0" >-1</text>
<text x="56.00" y="537.00" text-anchor="start" style="font-family:'Liberation Sans', sans-serif;font-size:13px;font-weight:normal" fill="#f0f0f0" >V</text>
<rect x="56" y="1001" width="1" height="4" fill="#ffffff"/>
<text x="57.00" y="1016.00" text-anchor="middle" style="font-family:'Liberation Sans', sans-serif;font-size:13px;font-weight:normal" fill="#f0f0f0" >0</text>
<rect x="205" y="1001" width="1" height="4" fill="#ffffff"/>
<text x="206.20" y="1016.00" text-anchor="middle" style="font-family:'Liberation Sans', sans-serif;font-size:13px;font-weight:normal" fill="#f0f0f0" >2e-3</text>
<rect x="354" y="1001" width="1" height="4" fill="#ffffff"/>
<text x="355.40" y="1016.00" text-anchor="middle" style="font-family:'Liberation Sans', sans-serif;font-size:13px;font-weight:normal" fill="#f0f0f0" >4e-3</text>
<rect x="503" y="1001" width="1" height="4" fill="#ffffff"/>
<text x="504.60" y="1016.00" text-anchor="middle" style="font-family:'Liberation Sans', sans-serif;font-size:13px;font-weight:normal" fill="#f0f0f0" >6e-3</text>
<rect x="652" y="1001" width="1" height="4" fill="#ffffff"/>
<text x="653.80" y="1016.00" text-anchor="middle" style="font-family:'Liberation Sans', sans-serif;font-size:13px;font-weight:normal" fill="#f0f0f0" >8e-3</text>
<rect x="802" y="1001" width="1" height="4" fill="#ffffff"/>
<text x="803.00" y="1016.00" text-anchor="middle" style="font-family:'Liberation Sans', sans-serif;font-size:13px;font-weight:normal" fill="#f0f0f0" >.01</text>
<text x="833.00" y="1016.00" text-anchor="middle" style="font-family:'Liberation Sans', sans-serif;font-size:13px;font-weight:normal" fill="#f0f0f0" >s</text>
<text x="0" y="0" transform="translate(430.00,535.00) scale(1,0.85)" text-anchor="middle" style="font-family:'Liberation Mono', monospace;font-size:15px;font-weight:normal" fill="#202040" >Канал 2</text>
<text x="0" y="0" transform="translate(429.00,534.00) scale(1,0.85)" text-anchor="middle" style="font-family:'Liberation Mono', monospace;font-size:15px;font-weight:normal" fill="#ffff00" >Канал 2</text>
<text x="0" y="0" transform="translate(810.50,568.00) scale(1,0.92)" text-anchor="middle" style="font-family:'Liberation Mono', monospace;font-size:12.5px;font-weight:bold" fill="#402030" >0</text>
<text x="0" y="0" transform="translate(809.50,567.00) scale(1,0.92)" text-anchor="middle" style="font-family:'Liberation Mono', monospace;font-size:12.5px;font-weight:bold" fill="#00ff00" >0</text>
<rect x="822" y="560" width="9" height="1.4" fill="#00ff00"/><rect x="822" y="564" width="9" height="1.4" fill="#00ff00"/>
<text x="0" y="0" transform="translate(847.00,568.00) scale(1,0.92)" text-anchor="middle" style="font-family:'Liberation Mono', monospace;font-size:12.5px;font-weight:bold" fill="#402030" >0</text>
<text x="0" y="0" transform="translate(846.00,567.00) scale(1,0.92)" text-anchor="middle" style="font-family:'Liberation Mono', monospace;font-size:12.5px;font-weight:bold" fill="#00ff00" >0</text>
<rect x="914" y="31" width="750" height="462" fill="#000040"/>
<line x1="916.5" y1="31" x2="916.5" y2="493" stroke="#58a074" stroke-width="1" stroke-dasharray="1 2"/>
<line x1="927.5" y1="31" x2="927.5" y2="493" stroke="#58a074" stroke-width="1" stroke-dasharray="1 2"/>
<line x1="938.5" y1="31" x2="938.5" y2="493" stroke="#58a074" stroke-width="1" stroke-dasharray="1 2"/>
<line x1="947.5" y1="31" x2="947.5" y2="493" stroke="#58a074" stroke-width="1" stroke-dasharray="1 2"/>
<line x1="955.5" y1="31" x2="955.5" y2="493" stroke="#58a074" stroke-width="1" stroke-dasharray="1 2"/>
<line x1="1009.5" y1="31" x2="1009.5" y2="493" stroke="#58a074" stroke-width="1" stroke-dasharray="1 2"/>
<line x1="1040.5" y1="31" x2="1040.5" y2="493" stroke="#58a074" stroke-width="1" stroke-dasharray="1 2"/>
<line x1="1062.5" y1="31" x2="1062.5" y2="493" stroke="#58a074" stroke-width="1" stroke-dasharray="1 2"/>
<line x1="1079.5" y1="31" x2="1079.5" y2="493" stroke="#58a074" stroke-width="1" stroke-dasharray="1 2"/>
<line x1="1094.5" y1="31" x2="1094.5" y2="493" stroke="#58a074" stroke-width="1" stroke-dasharray="1 2"/>
<line x1="1105.5" y1="31" x2="1105.5" y2="493" stroke="#58a074" stroke-width="1" stroke-dasharray="1 2"/>
<line x1="1116.5" y1="31" x2="1116.5" y2="493" stroke="#58a074" stroke-width="1" stroke-dasharray="1 2"/>
<line x1="1125.5" y1="31" x2="1125.5" y2="493" stroke="#58a074" stroke-width="1" stroke-dasharray="1 2"/>
<line x1="1133.5" y1="31" x2="1133.5" y2="493" stroke="#58a074" stroke-width="1" stroke-dasharray="1 2"/>
<line x1="1187.5" y1="31" x2="1187.5" y2="493" stroke="#58a074" stroke-width="1" stroke-dasharray="1 2"/>
<line x1="1218.5" y1="31" x2="1218.5" y2="493" stroke="#58a074" stroke-width="1" stroke-dasharray="1 2"/>
<line x1="1240.5" y1="31" x2="1240.5" y2="493" stroke="#58a074" stroke-width="1" stroke-dasharray="1 2"/>
<line x1="1257.5" y1="31" x2="1257.5" y2="493" stroke="#58a074" stroke-width="1" stroke-dasharray="1 2"/>
<line x1="1272.5" y1="31" x2="1272.5" y2="493" stroke="#58a074" stroke-width="1" stroke-dasharray="1 2"/>
<line x1="1283.5" y1="31" x2="1283.5" y2="493" stroke="#58a074" stroke-width="1" stroke-dasharray="1 2"/>
<line x1="1294.5" y1="31" x2="1294.5" y2="493" stroke="#58a074" stroke-width="1" stroke-dasharray="1 2"/>
<line x1="1303.5" y1="31" x2="1303.5" y2="493" stroke="#58a074" stroke-width="1" stroke-dasharray="1 2"/>
<line x1="1311.5" y1="31" x2="1311.5" y2="493" stroke="#58a074" stroke-width="1" stroke-dasharray="1 2"/>
<line x1="1364.5" y1="31" x2="1364.5" y2="493" stroke="#58a074" stroke-width="1" stroke-dasharray="1 2"/>
<line x1="1395.5" y1="31" x2="1395.5" y2="493" stroke="#58a074" stroke-width="1" stroke-dasharray="1 2"/>
<line x1="1418.5" y1="31" x2="1418.5" y2="493" stroke="#58a074" stroke-width="1" stroke-dasharray="1 2"/>
<line x1="1435.5" y1="31" x2="1435.5" y2="493" stroke="#58a074" stroke-width="1" stroke-dasharray="1 2"/>
<line x1="1449.5" y1="31" x2="1449.5" y2="493" stroke="#58a074" stroke-width="1" stroke-dasharray="1 2"/>
<line x1="1461.5" y1="31" x2="1461.5" y2="493" stroke="#58a074" stroke-width="1" stroke-dasharray="1 2"/>
<line x1="1471.5" y1="31" x2="1471.5" y2="493" stroke="#58a074" stroke-width="1" stroke-dasharray="1 2"/>
<line x1="1480.5" y1="31" x2="1480.5" y2="493" stroke="#58a074" stroke-width="1" stroke-dasharray="1 2"/>
<line x1="1488.5" y1="31" x2="1488.5" y2="493" stroke="#58a074" stroke-width="1" stroke-dasharray="1 2"/>
<line x1="1542.5" y1="31" x2="1542.5" y2="493" stroke="#58a074" stroke-width="1" stroke-dasharray="1 2"/>
<line x1="1573.5" y1="31" x2="1573.5" y2="493" stroke="#58a074" stroke-width="1" stroke-dasharray="1 2"/>
<line x1="1595.5" y1="31" x2="1595.5" y2="493" stroke="#58a074" stroke-width="1" stroke-dasharray="1 2"/>
<line x1="1613.5" y1="31" x2="1613.5" y2="493" stroke="#58a074" stroke-width="1" stroke-dasharray="1 2"/>
<line x1="1627.5" y1="31" x2="1627.5" y2="493" stroke="#58a074" stroke-width="1" stroke-dasharray="1 2"/>
<line x1="1639.5" y1="31" x2="1639.5" y2="493" stroke="#58a074" stroke-width="1" stroke-dasharray="1 2"/>
<line x1="1649.5" y1="31" x2="1649.5" y2="493" stroke="#58a074" stroke-width="1" stroke-dasharray="1 2"/>
<line x1="1658.5" y1="31" x2="1658.5" y2="493" stroke="#58a074" stroke-width="1" stroke-dasharray="1 2"/>
<line x1="914.5" y1="31" x2="914.5" y2="493" stroke="#58a074" stroke-width="1" stroke-dasharray="1 2"/>
<line x1="1663.5" y1="31" x2="1663.5" y2="493" stroke="#58a074" stroke-width="1" stroke-dasharray="1 2"/>
<line x1="914" y1="31.5" x2="1664" y2="31.5" stroke="#58a074" stroke-width="1" stroke-dasharray="1 2"/>
<line x1="914" y1="64.5" x2="1664" y2="64.5" stroke="#58a074" stroke-width="1" stroke-dasharray="1 2"/>
<line x1="914" y1="97.5" x2="1664" y2="97.5" stroke="#58a074" stroke-width="1" stroke-dasharray="1 2"/>
<line x1="914" y1="130.5" x2="1664" y2="130.5" stroke="#58a074" stroke-width="1" stroke-dasharray="1 2"/>
<line x1="914" y1="163.5" x2="1664" y2="163.5" stroke="#58a074" stroke-width="1" stroke-dasharray="2 1"/>
<line x1="914" y1="196.5" x2="1664" y2="196.5" stroke="#58a074" stroke-width="1" stroke-dasharray="1 2"/>
<line x1="914" y1="229.5" x2="1664" y2="229.5" stroke="#58a074" stroke-width="1" stroke-dasharray="1 2"/>
<line x1="914" y1="262.5" x2="1664" y2="262.5" stroke="#58a074" stroke-width="1" stroke-dasharray="1 2"/>
<line x1="914" y1="294.5" x2="1664" y2="294.5" stroke="#58a074" stroke-width="1" stroke-dasharray="1 2"/>
<line x1="914" y1="327.5" x2="1664" y2="327.5" stroke="#58a074" stroke-width="1" stroke-dasharray="1 2"/>
<line x1="914" y1="360.5" x2="1664" y2="360.5" stroke="#58a074" stroke-width="1" stroke-dasharray="1 2"/>
<line x1="914" y1="393.5" x2="1664" y2="393.5" stroke="#58a074" stroke-width="1" stroke-dasharray="1 2"/>
<line x1="914" y1="426.5" x2="1664" y2="426.5" stroke="#58a074" stroke-width="1" stroke-dasharray="1 2"/>
<line x1="914" y1="459.5" x2="1664" y2="459.5" stroke="#58a074" stroke-width="1" stroke-dasharray="1 2"/>
<line x1="914" y1="492.5" x2="1664" y2="492.5" stroke="#58a074" stroke-width="1" stroke-dasharray="1 2"/>
<text x="907.00" y="36.00" text-anchor="end" style="font-family:'Liberation Sans', sans-serif;font-size:13px;font-weight:normal" fill="#f0f0f0" >40</text>
<text x="907.00" y="102.00" text-anchor="end" style="font-family:'Liberation Sans', sans-serif;font-size:13px;font-weight:normal" fill="#f0f0f0" >20</text>
<text x="907.00" y="168.00" text-anchor="end" style="font-family:'Liberation Sans', sans-serif;font-size:13px;font-weight:normal" fill="#f0f0f0" >0</text>
<text x="907.00" y="234.00" text-anchor="end" style="font-family:'Liberation Sans', sans-serif;font-size:13px;font-weight:normal" fill="#f0f0f0" >-20</text>
<text x="907.00" y="299.00" text-anchor="end" style="font-family:'Liberation Sans', sans-serif;font-size:13px;font-weight:normal" fill="#f0f0f0" >-40</text>
<text x="907.00" y="365.00" text-anchor="end" style="font-family:'Liberation Sans', sans-serif;font-size:13px;font-weight:normal" fill="#f0f0f0" >-60</text>
<text x="907.00" y="431.00" text-anchor="end" style="font-family:'Liberation Sans', sans-serif;font-size:13px;font-weight:normal" fill="#f0f0f0" >-80</text>
<text x="907.00" y="497.00" text-anchor="end" style="font-family:'Liberation Sans', sans-serif;font-size:13px;font-weight:normal" fill="#f0f0f0" >-100</text>
<text x="914.00" y="26.00" text-anchor="start" style="font-family:'Liberation Sans', sans-serif;font-size:13px;font-weight:normal" fill="#f0f0f0" >dB</text>
<rect x="927" y="493" width="1" height="4" fill="#ffffff"/>
<text x="928.95" y="508.00" text-anchor="middle" style="font-family:'Liberation Sans', sans-serif;font-size:13px;font-weight:normal" fill="#f0f0f0" >7</text>
<rect x="955" y="493" width="1" height="4" fill="#ffffff"/>
<text x="956.50" y="508.00" text-anchor="middle" style="font-family:'Liberation Sans', sans-serif;font-size:13px;font-weight:normal" fill="#f0f0f0" >10</text>
<rect x="1009" y="493" width="1" height="4" fill="#ffffff"/>
<text x="1010.08" y="508.00" text-anchor="middle" style="font-family:'Liberation Sans', sans-serif;font-size:13px;font-weight:normal" fill="#f0f0f0" >20</text>
<rect x="1040" y="493" width="1" height="4" fill="#ffffff"/>
<text x="1041.43" y="508.00" text-anchor="middle" style="font-family:'Liberation Sans', sans-serif;font-size:13px;font-weight:normal" fill="#f0f0f0" >30</text>
<rect x="1079" y="493" width="1" height="4" fill="#ffffff"/>
<text x="1080.92" y="508.00" text-anchor="middle" style="font-family:'Liberation Sans', sans-serif;font-size:13px;font-weight:normal" fill="#f0f0f0" >50</text>
<rect x="1105" y="493" width="1" height="4" fill="#ffffff"/>
<text x="1106.93" y="508.00" text-anchor="middle" style="font-family:'Liberation Sans', sans-serif;font-size:13px;font-weight:normal" fill="#f0f0f0" >70</text>
<rect x="1133" y="493" width="1" height="4" fill="#ffffff"/>
<text x="1134.50" y="508.00" text-anchor="middle" style="font-family:'Liberation Sans', sans-serif;font-size:13px;font-weight:normal" fill="#f0f0f0" >100</text>
<rect x="1187" y="493" width="1" height="4" fill="#ffffff"/>
<text x="1188.08" y="508.00" text-anchor="middle" style="font-family:'Liberation Sans', sans-serif;font-size:13px;font-weight:normal" fill="#f0f0f0" >200</text>
<rect x="1240" y="493" width="1" height="4" fill="#ffffff"/>
<text x="1241.67" y="508.00" text-anchor="middle" style="font-family:'Liberation Sans', sans-serif;font-size:13px;font-weight:normal" fill="#f0f0f0" >400</text>
<rect x="1283" y="493" width="1" height="4" fill="#ffffff"/>
<text x="1284.93" y="508.00" text-anchor="middle" style="font-family:'Liberation Sans', sans-serif;font-size:13px;font-weight:normal" fill="#f0f0f0" >700</text>
<rect x="1311" y="493" width="1" height="4" fill="#ffffff"/>
<text x="1312.50" y="508.00" text-anchor="middle" style="font-family:'Liberation Sans', sans-serif;font-size:13px;font-weight:normal" fill="#f0f0f0" >1k</text>
<rect x="1364" y="493" width="1" height="4" fill="#ffffff"/>
<text x="1365.78" y="508.00" text-anchor="middle" style="font-family:'Liberation Sans', sans-serif;font-size:13px;font-weight:normal" fill="#f0f0f0" >2k</text>
<rect x="1395" y="493" width="1" height="4" fill="#ffffff"/>
<text x="1396.95" y="508.00" text-anchor="middle" style="font-family:'Liberation Sans', sans-serif;font-size:13px;font-weight:normal" fill="#f0f0f0" >3k</text>
<rect x="1435" y="493" width="1" height="4" fill="#ffffff"/>
<text x="1436.22" y="508.00" text-anchor="middle" style="font-family:'Liberation Sans', sans-serif;font-size:13px;font-weight:normal" fill="#f0f0f0" >5k</text>
<rect x="1461" y="493" width="1" height="4" fill="#ffffff"/>
<text x="1462.08" y="508.00" text-anchor="middle" style="font-family:'Liberation Sans', sans-serif;font-size:13px;font-weight:normal" fill="#f0f0f0" >7k</text>
<rect x="1488" y="493" width="1" height="4" fill="#ffffff"/>
<text x="1489.50" y="508.00" text-anchor="middle" style="font-family:'Liberation Sans', sans-serif;font-size:13px;font-weight:normal" fill="#f0f0f0" >10k</text>
<rect x="1542" y="493" width="1" height="4" fill="#ffffff"/>
<text x="1543.13" y="508.00" text-anchor="middle" style="font-family:'Liberation Sans', sans-serif;font-size:13px;font-weight:normal" fill="#f0f0f0" >20k</text>
<rect x="1595" y="493" width="1" height="4" fill="#ffffff"/>
<text x="1596.76" y="508.00" text-anchor="middle" style="font-family:'Liberation Sans', sans-serif;font-size:13px;font-weight:normal" fill="#f0f0f0" >40k</text>
<rect x="1627" y="493" width="1" height="4" fill="#ffffff"/>
<text x="1628.13" y="508.00" text-anchor="middle" style="font-family:'Liberation Sans', sans-serif;font-size:13px;font-weight:normal" fill="#f0f0f0" >60k</text>
<rect x="1658" y="493" width="1" height="4" fill="#ffffff"/>
<text x="1659.50" y="508.00" text-anchor="middle" style="font-family:'Liberation Sans', sans-serif;font-size:13px;font-weight:normal" fill="#f0f0f0" >90k</text>
<text x="1689.00" y="508.00" text-anchor="middle" style="font-family:'Liberation Sans', sans-serif;font-size:13px;font-weight:normal" fill="#f0f0f0" >Hz</text>
<text x="1680.00" y="489.00" text-anchor="middle" style="font-family:'Liberation Sans', sans-serif;font-size:13px;font-weight:normal" fill="#f0f0f0" >2.929</text>
<text x="0" y="0" transform="translate(1289.00,24.00) scale(1,0.85)" text-anchor="middle" style="font-family:'Liberation Mono', monospace;font-size:15px;font-weight:normal" fill="#202040" >Канал 1</text>
<text x="0" y="0" transform="translate(1288.00,23.00) scale(1,0.85)" text-anchor="middle" style="font-family:'Liberation Mono', monospace;font-size:15px;font-weight:normal" fill="#ffff00" >Канал 1</text>
<rect x="1666.5" y="348.5" width="10" height="10" fill="#000040" stroke="#2020ff" stroke-width="1"/>
<rect x="1665.5" y="347.5" width="12" height="12" fill="none" stroke="#000030" stroke-width="1"/>
<rect x="1666.5" y="361.5" width="10" height="10" fill="#000040" stroke="#00e0ff" stroke-width="1"/>
<rect x="1665.5" y="360.5" width="12" height="12" fill="none" stroke="#000030" stroke-width="1"/>
<rect x="1666.5" y="374.5" width="10" height="10" fill="#000040" stroke="#ff00ff" stroke-width="1"/>
<rect x="1665.5" y="373.5" width="12" height="12" fill="none" stroke="#000030" stroke-width="1"/>
<rect x="1666.5" y="387.5" width="10" height="10" fill="#000040" stroke="#ffff00" stroke-width="1"/>
<rect x="1665.5" y="386.5" width="12" height="12" fill="none" stroke="#000030" stroke-width="1"/>
<rect x="1666.5" y="400.5" width="10" height="10" fill="#000040" stroke="#ff6000" stroke-width="1"/>
<rect x="1665.5" y="399.5" width="12" height="12" fill="none" stroke="#000030" stroke-width="1"/>
<rect x="1666.5" y="413.5" width="10" height="10" fill="#000040" stroke="#8080ff" stroke-width="1"/>
<rect x="1665.5" y="412.5" width="12" height="12" fill="none" stroke="#000030" stroke-width="1"/>
<rect x="1666.5" y="426.5" width="10" height="10" fill="#000040" stroke="#c0c0c0" stroke-width="1"/>
<rect x="1665.5" y="425.5" width="12" height="12" fill="none" stroke="#000030" stroke-width="1"/>
<rect x="1666.5" y="439.5" width="10" height="10" fill="#000040" stroke="#ff80ff" stroke-width="1"/>
<rect x="1665.5" y="438.5" width="12" height="12" fill="none" stroke="#000030" stroke-width="1"/>
<rect x="1666.5" y="452.5" width="10" height="10" fill="#000040" stroke="#ffa000" stroke-width="1"/>
<rect x="1665.5" y="451.5" width="12" height="12" fill="none" stroke="#000030" stroke-width="1"/>
<rect x="1666.5" y="465.5" width="10" height="10" fill="#000040" stroke="#c0ff00" stroke-width="1"/>
<rect x="1665.5" y="464.5" width="12" height="12" fill="none" stroke="#000030" stroke-width="1"/>
<rect x="914" y="542" width="750" height="459" fill="#000040"/>
<line x1="916.5" y1="542" x2="916.5" y2="1001" stroke="#58a074" stroke-width="1" stroke-dasharray="1 2"/>
<line x1="927.5" y1="542" x2="927.5" y2="1001" stroke="#58a074" stroke-width="1" stroke-dasharray="1 2"/>
<line x1="938.5" y1="542" x2="938.5" y2="1001" stroke="#58a074" stroke-width="1" stroke-dasharray="1 2"/>
<line x1="947.5" y1="542" x2="947.5" y2="1001" stroke="#58a074" stroke-width="1" stroke-dasharray="1 2"/>
<line x1="955.5" y1="542" x2="955.5" y2="1001" stroke="#58a074" stroke-width="1" stroke-dasharray="1 2"/>
<line x1="1009.5" y1="542" x2="1009.5" y2="1001" stroke="#58a074" stroke-width="1" stroke-dasharray="1 2"/>
<line x1="1040.5" y1="542" x2="1040.5" y2="1001" stroke="#58a074" stroke-width="1" stroke-dasharray="1 2"/>
<line x1="1062.5" y1="542" x2="1062.5" y2="1001" stroke="#58a074" stroke-width="1" stroke-dasharray="1 2"/>
<line x1="1079.5" y1="542" x2="1079.5" y2="1001" stroke="#58a074" stroke-width="1" stroke-dasharray="1 2"/>
<line x1="1094.5" y1="542" x2="1094.5" y2="1001" stroke="#58a074" stroke-width="1" stroke-dasharray="1 2"/>
<line x1="1105.5" y1="542" x2="1105.5" y2="1001" stroke="#58a074" stroke-width="1" stroke-dasharray="1 2"/>
<line x1="1116.5" y1="542" x2="1116.5" y2="1001" stroke="#58a074" stroke-width="1" stroke-dasharray="1 2"/>
<line x1="1125.5" y1="542" x2="1125.5" y2="1001" stroke="#58a074" stroke-width="1" stroke-dasharray="1 2"/>
<line x1="1133.5" y1="542" x2="1133.5" y2="1001" stroke="#58a074" stroke-width="1" stroke-dasharray="1 2"/>
<line x1="1187.5" y1="542" x2="1187.5" y2="1001" stroke="#58a074" stroke-width="1" stroke-dasharray="1 2"/>
<line x1="1218.5" y1="542" x2="1218.5" y2="1001" stroke="#58a074" stroke-width="1" stroke-dasharray="1 2"/>
<line x1="1240.5" y1="542" x2="1240.5" y2="1001" stroke="#58a074" stroke-width="1" stroke-dasharray="1 2"/>
<line x1="1257.5" y1="542" x2="1257.5" y2="1001" stroke="#58a074" stroke-width="1" stroke-dasharray="1 2"/>
<line x1="1272.5" y1="542" x2="1272.5" y2="1001" stroke="#58a074" stroke-width="1" stroke-dasharray="1 2"/>
<line x1="1283.5" y1="542" x2="1283.5" y2="1001" stroke="#58a074" stroke-width="1" stroke-dasharray="1 2"/>
<line x1="1294.5" y1="542" x2="1294.5" y2="1001" stroke="#58a074" stroke-width="1" stroke-dasharray="1 2"/>
<line x1="1303.5" y1="542" x2="1303.5" y2="1001" stroke="#58a074" stroke-width="1" stroke-dasharray="1 2"/>
<line x1="1311.5" y1="542" x2="1311.5" y2="1001" stroke="#58a074" stroke-width="1" stroke-dasharray="1 2"/>
<line x1="1364.5" y1="542" x2="1364.5" y2="1001" stroke="#58a074" stroke-width="1" stroke-dasharray="1 2"/>
<line x1="1395.5" y1="542" x2="1395.5" y2="1001" stroke="#58a074" stroke-width="1" stroke-dasharray="1 2"/>
<line x1="1418.5" y1="542" x2="1418.5" y2="1001" stroke="#58a074" stroke-width="1" stroke-dasharray="1 2"/>
<line x1="1435.5" y1="542" x2="1435.5" y2="1001" stroke="#58a074" stroke-width="1" stroke-dasharray="1 2"/>
<line x1="1449.5" y1="542" x2="1449.5" y2="1001" stroke="#58a074" stroke-width="1" stroke-dasharray="1 2"/>
<line x1="1461.5" y1="542" x2="1461.5" y2="1001" stroke="#58a074" stroke-width="1" stroke-dasharray="1 2"/>
<line x1="1471.5" y1="542" x2="1471.5" y2="1001" stroke="#58a074" stroke-width="1" stroke-dasharray="1 2"/>
<line x1="1480.5" y1="542" x2="1480.5" y2="1001" stroke="#58a074" stroke-width="1" stroke-dasharray="1 2"/>
<line x1="1488.5" y1="542" x2="1488.5" y2="1001" stroke="#58a074" stroke-width="1" stroke-dasharray="1 2"/>
<line x1="1542.5" y1="542" x2="1542.5" y2="1001" stroke="#58a074" stroke-width="1" stroke-dasharray="1 2"/>
<line x1="1573.5" y1="542" x2="1573.5" y2="1001" stroke="#58a074" stroke-width="1" stroke-dasharray="1 2"/>
<line x1="1595.5" y1="542" x2="1595.5" y2="1001" stroke="#58a074" stroke-width="1" stroke-dasharray="1 2"/>
<line x1="1613.5" y1="542" x2="1613.5" y2="1001" stroke="#58a074" stroke-width="1" stroke-dasharray="1 2"/>
<line x1="1627.5" y1="542" x2="1627.5" y2="1001" stroke="#58a074" stroke-width="1" stroke-dasharray="1 2"/>
<line x1="1639.5" y1="542" x2="1639.5" y2="1001" stroke="#58a074" stroke-width="1" stroke-dasharray="1 2"/>
<line x1="1649.5" y1="542" x2="1649.5" y2="1001" stroke="#58a074" stroke-width="1" stroke-dasharray="1 2"/>
<line x1="1658.5" y1="542" x2="1658.5" y2="1001" stroke="#58a074" stroke-width="1" stroke-dasharray="1 2"/>
<line x1="914.5" y1="542" x2="914.5" y2="1001" stroke="#58a074" stroke-width="1" stroke-dasharray="1 2"/>
<line x1="1663.5" y1="542" x2="1663.5" y2="1001" stroke="#58a074" stroke-width="1" stroke-dasharray="1 2"/>
<line x1="914" y1="542.5" x2="1664" y2="542.5" stroke="#58a074" stroke-width="1" stroke-dasharray="2 1"/>
<line x1="914" y1="575.5" x2="1664" y2="575.5" stroke="#58a074" stroke-width="1" stroke-dasharray="1 2"/>
<line x1="914" y1="607.5" x2="1664" y2="607.5" stroke="#58a074" stroke-width="1" stroke-dasharray="1 2"/>
<line x1="914" y1="640.5" x2="1664" y2="640.5" stroke="#58a074" stroke-width="1" stroke-dasharray="1 2"/>
<line x1="914" y1="673.5" x2="1664" y2="673.5" stroke="#58a074" stroke-width="1" stroke-dasharray="1 2"/>
<line x1="914" y1="706.5" x2="1664" y2="706.5" stroke="#58a074" stroke-width="1" stroke-dasharray="1 2"/>
<line x1="914" y1="738.5" x2="1664" y2="738.5" stroke="#58a074" stroke-width="1" stroke-dasharray="1 2"/>
<line x1="914" y1="771.5" x2="1664" y2="771.5" stroke="#58a074" stroke-width="1" stroke-dasharray="1 2"/>
<line x1="914" y1="804.5" x2="1664" y2="804.5" stroke="#58a074" stroke-width="1" stroke-dasharray="1 2"/>
<line x1="914" y1="836.5" x2="1664" y2="836.5" stroke="#58a074" stroke-width="1" stroke-dasharray="1 2"/>
<line x1="914" y1="869.5" x2="1664" y2="869.5" stroke="#58a074" stroke-width="1" stroke-dasharray="1 2"/>
<line x1="914" y1="902.5" x2="1664" y2="902.5" stroke="#58a074" stroke-width="1" stroke-dasharray="1 2"/>
<line x1="914" y1="935.5" x2="1664" y2="935.5" stroke="#58a074" stroke-width="1" stroke-dasharray="1 2"/>
<line x1="914" y1="967.5" x2="1664" y2="967.5" stroke="#58a074" stroke-width="1" stroke-dasharray="1 2"/>
<line x1="914" y1="1000.5" x2="1664" y2="1000.5" stroke="#58a074" stroke-width="1" stroke-dasharray="1 2"/>
<text x="907.00" y="547.00" text-anchor="end" style="font-family:'Liberation Sans', sans-serif;font-size:13px;font-weight:normal" fill="#f0f0f0" >0</text>
<text x="907.00" y="612.00" text-anchor="end" style="font-family:'Liberation Sans', sans-serif;font-size:13px;font-weight:normal" fill="#f0f0f0" >-20</text>
<text x="907.00" y="678.00" text-anchor="end" style="font-family:'Liberation Sans', sans-serif;font-size:13px;font-weight:normal" fill="#f0f0f0" >-40</text>
<text x="907.00" y="743.00" text-anchor="end" style="font-family:'Liberation Sans', sans-serif;font-size:13px;font-weight:normal" fill="#f0f0f0" >-60</text>
<text x="907.00" y="809.00" text-anchor="end" style="font-family:'Liberation Sans', sans-serif;font-size:13px;font-weight:normal" fill="#f0f0f0" >-80</text>
<text x="907.00" y="874.00" text-anchor="end" style="font-family:'Liberation Sans', sans-serif;font-size:13px;font-weight:normal" fill="#f0f0f0" >-100</text>
<text x="907.00" y="940.00" text-anchor="end" style="font-family:'Liberation Sans', sans-serif;font-size:13px;font-weight:normal" fill="#f0f0f0" >-120</text>
<text x="907.00" y="1005.00" text-anchor="end" style="font-family:'Liberation Sans', sans-serif;font-size:13px;font-weight:normal" fill="#f0f0f0" >-140</text>
<text x="914.00" y="537.00" text-anchor="start" style="font-family:'Liberation Sans', sans-serif;font-size:13px;font-weight:normal" fill="#f0f0f0" >dB</text>
<rect x="927" y="1001" width="1" height="4" fill="#ffffff"/>
<text x="928.95" y="1016.00" text-anchor="middle" style="font-family:'Liberation Sans', sans-serif;font-size:13px;font-weight:normal" fill="#f0f0f0" >7</text>
<rect x="955" y="1001" width="1" height="4" fill="#ffffff"/>
<text x="956.50" y="1016.00" text-anchor="middle" style="font-family:'Liberation Sans', sans-serif;font-size:13px;font-weight:normal" fill="#f0f0f0" >10</text>
<rect x="1009" y="1001" width="1" height="4" fill="#ffffff"/>
<text x="1010.08" y="1016.00" text-anchor="middle" style="font-family:'Liberation Sans', sans-serif;font-size:13px;font-weight:normal" fill="#f0f0f0" >20</text>
<rect x="1040" y="1001" width="1" height="4" fill="#ffffff"/>
<text x="1041.43" y="1016.00" text-anchor="middle" style="font-family:'Liberation Sans', sans-serif;font-size:13px;font-weight:normal" fill="#f0f0f0" >30</text>
<rect x="1079" y="1001" width="1" height="4" fill="#ffffff"/>
<text x="1080.92" y="1016.00" text-anchor="middle" style="font-family:'Liberation Sans', sans-serif;font-size:13px;font-weight:normal" fill="#f0f0f0" >50</text>
<rect x="1105" y="1001" width="1" height="4" fill="#ffffff"/>
<text x="1106.93" y="1016.00" text-anchor="middle" style="font-family:'Liberation Sans', sans-serif;font-size:13px;font-weight:normal" fill="#f0f0f0" >70</text>
<rect x="1133" y="1001" width="1" height="4" fill="#ffffff"/>
<text x="1134.50" y="1016.00" text-anchor="middle" style="font-family:'Liberation Sans', sans-serif;font-size:13px;font-weight:normal" fill="#f0f0f0" >100</text>
<rect x="1187" y="1001" width="1" height="4" fill="#ffffff"/>
<text x="1188.08" y="1016.00" text-anchor="middle" style="font-family:'Liberation Sans', sans-serif;font-size:13px;font-weight:normal" fill="#f0f0f0" >200</text>
<rect x="1240" y="1001" width="1" height="4" fill="#ffffff"/>
<text x="1241.67" y="1016.00" text-anchor="middle" style="font-family:'Liberation Sans', sans-serif;font-size:13px;font-weight:normal" fill="#f0f0f0" >400</text>
<rect x="1283" y="1001" width="1" height="4" fill="#ffffff"/>
<text x="1284.93" y="1016.00" text-anchor="middle" style="font-family:'Liberation Sans', sans-serif;font-size:13px;font-weight:normal" fill="#f0f0f0" >700</text>
<rect x="1311" y="1001" width="1" height="4" fill="#ffffff"/>
<text x="1312.50" y="1016.00" text-anchor="middle" style="font-family:'Liberation Sans', sans-serif;font-size:13px;font-weight:normal" fill="#f0f0f0" >1k</text>
<rect x="1364" y="1001" width="1" height="4" fill="#ffffff"/>
<text x="1365.78" y="1016.00" text-anchor="middle" style="font-family:'Liberation Sans', sans-serif;font-size:13px;font-weight:normal" fill="#f0f0f0" >2k</text>
<rect x="1395" y="1001" width="1" height="4" fill="#ffffff"/>
<text x="1396.95" y="1016.00" text-anchor="middle" style="font-family:'Liberation Sans', sans-serif;font-size:13px;font-weight:normal" fill="#f0f0f0" >3k</text>
<rect x="1435" y="1001" width="1" height="4" fill="#ffffff"/>
<text x="1436.22" y="1016.00" text-anchor="middle" style="font-family:'Liberation Sans', sans-serif;font-size:13px;font-weight:normal" fill="#f0f0f0" >5k</text>
<rect x="1461" y="1001" width="1" height="4" fill="#ffffff"/>
<text x="1462.08" y="1016.00" text-anchor="middle" style="font-family:'Liberation Sans', sans-serif;font-size:13px;font-weight:normal" fill="#f0f0f0" >7k</text>
<rect x="1488" y="1001" width="1" height="4" fill="#ffffff"/>
<text x="1489.50" y="1016.00" text-anchor="middle" style="font-family:'Liberation Sans', sans-serif;font-size:13px;font-weight:normal" fill="#f0f0f0" >10k</text>
<rect x="1542" y="1001" width="1" height="4" fill="#ffffff"/>
<text x="1543.13" y="1016.00" text-anchor="middle" style="font-family:'Liberation Sans', sans-serif;font-size:13px;font-weight:normal" fill="#f0f0f0" >20k</text>
<rect x="1595" y="1001" width="1" height="4" fill="#ffffff"/>
<text x="1596.76" y="1016.00" text-anchor="middle" style="font-family:'Liberation Sans', sans-serif;font-size:13px;font-weight:normal" fill="#f0f0f0" >40k</text>
<rect x="1627" y="1001" width="1" height="4" fill="#ffffff"/>
<text x="1628.13" y="1016.00" text-anchor="middle" style="font-family:'Liberation Sans', sans-serif;font-size:13px;font-weight:normal" fill="#f0f0f0" >60k</text>
<rect x="1658" y="1001" width="1" height="4" fill="#ffffff"/>
<text x="1659.50" y="1016.00" text-anchor="middle" style="font-family:'Liberation Sans', sans-serif;font-size:13px;font-weight:normal" fill="#f0f0f0" >90k</text>
<text x="1689.00" y="1016.00" text-anchor="middle" style="font-family:'Liberation Sans', sans-serif;font-size:13px;font-weight:normal" fill="#f0f0f0" >Hz</text>
<text x="1680.00" y="997.00" text-anchor="middle" style="font-family:'Liberation Sans', sans-serif;font-size:13px;font-weight:normal" fill="#f0f0f0" >2.929</text>
<text x="0" y="0" transform="translate(1289.00,535.00) scale(1,0.85)" text-anchor="middle" style="font-family:'Liberation Mono', monospace;font-size:15px;font-weight:normal" fill="#202040" >Канал 2</text>
<text x="0" y="0" transform="translate(1288.00,534.00) scale(1,0.85)" text-anchor="middle" style="font-family:'Liberation Mono', monospace;font-size:15px;font-weight:normal" fill="#ffff00" >Канал 2</text>
<rect x="1666.5" y="856.5" width="10" height="10" fill="#000040" stroke="#2020ff" stroke-width="1"/>
<rect x="1665.5" y="855.5" width="12" height="12" fill="none" stroke="#000030" stroke-width="1"/>
<rect x="1666.5" y="869.5" width="10" height="10" fill="#000040" stroke="#00e0ff" stroke-width="1"/>
<rect x="1665.5" y="868.5" width="12" height="12" fill="none" stroke="#000030" stroke-width="1"/>
<rect x="1666.5" y="882.5" width="10" height="10" fill="#000040" stroke="#ff00ff" stroke-width="1"/>
<rect x="1665.5" y="881.5" width="12" height="12" fill="none" stroke="#000030" stroke-width="1"/>
<rect x="1666.5" y="895.5" width="10" height="10" fill="#000040" stroke="#ffff00" stroke-width="1"/>
<rect x="1665.5" y="894.5" width="12" height="12" fill="none" stroke="#000030" stroke-width="1"/>
<rect x="1666.5" y="908.5" width="10" height="10" fill="#000040" stroke="#ff6000" stroke-width="1"/>
<rect x="1665.5" y="907.5" width="12" height="12" fill="none" stroke="#000030" stroke-width="1"/>
<rect x="1666.5" y="921.5" width="10" height="10" fill="#000040" stroke="#8080ff" stroke-width="1"/>
<rect x="1665.5" y="920.5" width="12" height="12" fill="none" stroke="#000030" stroke-width="1"/>
<rect x="1666.5" y="934.5" width="10" height="10" fill="#000040" stroke="#c0c0c0" stroke-width="1"/>
<rect x="1665.5" y="933.5" width="12" height="12" fill="none" stroke="#000030" stroke-width="1"/>
<rect x="1666.5" y="947.5" width="10" height="10" fill="#000040" stroke="#ff80ff" stroke-width="1"/>
<rect x="1665.5" y="946.5" width="12" height="12" fill="none" stroke="#000030" stroke-width="1"/>
<rect x="1666.5" y="960.5" width="10" height="10" fill="#000040" stroke="#ffa000" stroke-width="1"/>
<rect x="1665.5" y="959.5" width="12" height="12" fill="none" stroke="#000030" stroke-width="1"/>
<rect x="1666.5" y="973.5" width="10" height="10" fill="#000040" stroke="#c0ff00" stroke-width="1"/>
<rect x="1665.5" y="972.5" width="12" height="12" fill="none" stroke="#000030" stroke-width="1"/>
<polyline points="56.50,250.00 56.00,268.53 56.50,264.45 57.00,260.37 57.50,256.29 58.00,252.22 58.50,248.16 59.00,244.13 59.50,240.14 60.00,236.18 60.50,232.27 61.00,228.41 61.50,224.61 62.00,220.87 62.50,217.21 63.00,213.63 63.50,210.13 64.00,206.72 64.50,203.42 65.00,200.21 65.50,197.12 66.00,194.14 66.50,191.28 67.00,188.54 67.50,185.94 68.00,183.47 68.50,181.14 69.00,178.95 69.50,176.91 70.00,175.02 70.50,173.28 71.00,171.70 71.50,170.28 72.00,169.02 72.50,167.92 73.00,167.00 73.50,166.24 74.00,165.65 74.50,165.23 75.00,164.98 75.50,164.90 76.00,164.99 76.50,165.26 77.00,165.70 77.50,166.31 78.00,167.08 78.50,168.03 79.00,169.14 79.50,170.41 80.00,171.85 80.50,173.44 81.00,175.20 81.50,177.10 82.00,179.16 82.50,181.36 83.00,183.71 83.50,186.19 84.00,188.81 84.50,191.56 85.00,194.43 85.50,197.42 86.00,200.53 86.50,203.74 87.00,207.06 87.50,210.48 88.00,213.98 88.50,217.57 89.00,221.24 89.50,224.98 90.00,228.79 90.50,232.66 91.00,236.57 91.50,240.54 92.00,244.54 92.50,248.57 93.00,252.62 93.50,256.69 94.00,260.77 94.50,264.86 95.00,268.94 95.50,273.00 96.00,277.05 96.50,281.07 97.00,285.05 97.50,289.00 98.00,292.90 98.50,296.74 99.00,300.52 99.50,304.24 100.00,307.87 100.50,311.43 101.00,314.90 101.50,318.28 102.00,321.56 102.50,324.73 103.00,327.79 103.50,330.73 104.00,333.56 104.50,336.25 105.00,338.82 105.50,341.25 106.00,343.53 106.50,345.68 107.00,347.68 107.50,349.52 108.00,351.21 108.50,352.75 109.00,354.12 109.50,355.33 110.00,356.37 110.50,357.25 111.00,357.96 111.50,358.50 112.00,358.87 112.50,359.06 113.00,359.09 113.50,358.94 114.00,358.63 114.50,358.14 115.00,357.48 115.50,356.65 116.00,355.66 116.50,354.50 117.00,353.17 117.50,351.69 118.00,350.05 118.50,348.25 119.00,346.29 119.50,344.19 120.00,341.95 120.50,339.56 121.00,337.04 121.50,334.38 122.00,331.59 122.50,328.68 123.00,325.66 123.50,322.52 124.00,319.27 124.50,315.92 125.00,312.48 125.50,308.95 126.00,305.33 126.50,301.64 127.00,297.88 127.50,294.06 128.00,290.17 128.50,286.24 129.00,282.27 129.50,278.26 130.00,274.22 130.50,270.16 131.00,266.08 131.50,262.00 132.00,257.92 132.50,253.84 133.00,249.78 133.50,245.74 134.00,241.73 134.50,237.76 135.00,233.83 135.50,229.94 136.00,226.12 136.50,222.36 137.00,218.67 137.50,215.05 138.00,211.52 138.50,208.08 139.00,204.73 139.50,201.48 140.00,198.34 140.50,195.32 141.00,192.41 141.50,189.62 142.00,186.96 142.50,184.44 143.00,182.05 143.50,179.81 144.00,177.71 144.50,175.75 145.00,173.95 145.50,172.31 146.00,170.83 146.50,169.50 147.00,168.34 147.50,167.35 148.00,166.52 148.50,165.86 149.00,165.37 149.50,165.06 150.00,164.91 150.50,164.94 151.00,165.13 151.50,165.50 152.00,166.04 152.50,166.75 153.00,167.63 153.50,168.67 154.00,169.88 154.50,171.25 155.00,172.79 155.50,174.48 156.00,176.32 156.50,178.32 157.00,180.47 157.50,182.75 158.00,185.18 158.50,187.75 159.00,190.44 159.50,193.27 160.00,196.21 160.50,199.27 161.00,202.44 161.50,205.72 162.00,209.10 162.50,212.57 163.00,216.13 163.50,219.76 164.00,223.48 164.50,227.26 165.00,231.10 165.50,235.00 166.00,238.95 166.50,242.93 167.00,246.95 167.50,251.00 168.00,255.06 168.50,259.14 169.00,263.23 169.50,267.31 170.00,271.38 170.50,275.43 171.00,279.46 171.50,283.46 172.00,287.43 172.50,291.34 173.00,295.21 173.50,299.02 174.00,302.76 174.50,306.43 175.00,310.02 175.50,313.52 176.00,316.94 176.50,320.26 177.00,323.47 177.50,326.58 178.00,329.57 178.50,332.44 179.00,335.19 179.50,337.81 180.00,340.29 180.50,342.64 181.00,344.84 181.50,346.90 182.00,348.80 182.50,350.56 183.00,352.15 183.50,353.59 184.00,354.86 184.50,355.97 185.00,356.92 185.50,357.69 186.00,358.30 186.50,358.74 187.00,359.01 187.50,359.10 188.00,359.02 188.50,358.77 189.00,358.35 189.50,357.76 190.00,357.00 190.50,356.08 191.00,354.98 191.50,353.72 192.00,352.30 192.50,350.72 193.00,348.98 193.50,347.09 194.00,345.05 194.50,342.86 195.00,340.53 195.50,338.06 196.00,335.46 196.50,332.72 197.00,329.86 197.50,326.88 198.00,323.79 198.50,320.58 199.00,317.28 199.50,313.87 200.00,310.37 200.50,306.79 201.00,303.13 201.50,299.39 202.00,295.59 202.50,291.73 203.00,287.82 203.50,283.86 204.00,279.87 204.50,275.84 205.00,271.78 205.50,267.71 206.00,263.63 206.50,259.55 207.00,255.47 207.50,251.40 208.00,247.35 208.50,243.33 209.00,239.34 209.50,235.39 210.00,231.49 210.50,227.64 211.00,223.85 211.50,220.13 212.00,216.49 212.50,212.92 213.00,209.44 213.50,206.06 214.00,202.77 214.50,199.59 215.00,196.51 215.50,193.56 216.00,190.72 216.50,188.01 217.00,185.43 217.50,182.99 218.00,180.69 218.50,178.53 219.00,176.52 219.50,174.66 220.00,172.95 220.50,171.40 221.00,170.01 221.50,168.79 222.00,167.73 222.50,166.83 223.00,166.11 223.50,165.55 224.00,165.16 224.50,164.95 225.00,164.91 225.50,165.03 226.00,165.33 226.50,165.81 227.00,166.45 227.50,167.26 228.00,168.24 228.50,169.38 229.00,170.69 229.50,172.16 230.00,173.78 230.50,175.57 231.00,177.50 231.50,179.59 232.00,181.82 232.50,184.20 233.00,186.71 233.50,189.35 234.00,192.12 234.50,195.02 235.00,198.04 235.50,201.16 236.00,204.40 236.50,207.74 237.00,211.17 237.50,214.69 238.00,218.30 238.50,221.98 239.00,225.74 239.50,229.56 240.00,233.44 240.50,237.36 241.00,241.33 241.50,245.34 242.00,249.38 242.50,253.44 243.00,257.51 243.50,261.59 244.00,265.67 244.50,269.75 245.00,273.81 245.50,277.85 246.00,281.87 246.50,285.85 247.00,289.78 247.50,293.67 248.00,297.50 248.50,301.27 249.00,304.97 249.50,308.59 250.00,312.13 250.50,315.58 251.00,318.94 251.50,322.20 252.00,325.35 252.50,328.39 253.00,331.31 253.50,334.10 254.00,336.78 254.50,339.31 255.00,341.71 255.50,343.98 256.00,346.09 256.50,348.06 257.00,349.87 257.50,351.53 258.00,353.03 258.50,354.37 259.00,355.55 259.50,356.56 260.00,357.40 260.50,358.08 261.00,358.59 261.50,358.92 262.00,359.08 262.50,359.07 263.00,358.89 263.50,358.54 264.00,358.02 264.50,357.33 265.00,356.47 265.50,355.44 266.00,354.25 266.50,352.89 267.00,351.37 267.50,349.70 268.00,347.87 268.50,345.89 269.00,343.76 269.50,341.48 270.00,339.07 270.50,336.51 271.00,333.83 271.50,331.02 272.00,328.09 272.50,325.04 273.00,321.88 273.50,318.61 274.00,315.24 274.50,311.78 275.00,308.23 275.50,304.60 276.00,300.90 276.50,297.12 277.00,293.28 277.50,289.39 278.00,285.45 278.50,281.47 279.00,277.45 279.50,273.41 280.00,269.34 280.50,265.27 281.00,261.18 281.50,257.10 282.00,253.03 282.50,248.97 283.00,244.94 283.50,240.93 284.00,236.97 284.50,233.04 285.00,229.17 285.50,225.36 286.00,221.61 286.50,217.94 287.00,214.34 287.50,210.82 288.00,207.40 288.50,204.07 289.00,200.85 289.50,197.73 290.00,194.73 290.50,191.84 291.00,189.08 291.50,186.45 292.00,183.95 292.50,181.59 293.00,179.37 293.50,177.30 294.00,175.38 294.50,173.61 295.00,172.00 295.50,170.55 296.00,169.26 296.50,168.13 297.00,167.17 297.50,166.38 298.00,165.75 298.50,165.30 299.00,165.01 299.50,164.90 300.00,164.96 300.50,165.19 301.00,165.60 301.50,166.17 302.00,166.91 302.50,167.82 303.00,168.90 303.50,170.14 304.00,171.55 304.50,173.11 305.00,174.83 305.50,176.71 306.00,178.74 306.50,180.91 307.00,183.23 307.50,185.69 308.00,188.28 308.50,191.00 309.00,193.85 309.50,196.82 310.00,199.90 310.50,203.09 311.00,206.39 311.50,209.79 312.00,213.27 312.50,216.85 313.00,220.50 313.50,224.23 314.00,228.02 314.50,231.88 315.00,235.79 315.50,239.74 316.00,243.73 316.50,247.76 317.00,251.81 317.50,255.88 318.00,259.96 318.50,264.04 319.00,268.12 319.50,272.19 320.00,276.24 320.50,280.27 321.00,284.26 321.50,288.21 322.00,292.12 322.50,295.98 323.00,299.77 323.50,303.50 324.00,307.15 324.50,310.73 325.00,314.21 325.50,317.61 326.00,320.91 326.50,324.10 327.00,327.18 327.50,330.15 328.00,333.00 328.50,335.72 329.00,338.31 329.50,340.77 330.00,343.09 330.50,345.26 331.00,347.29 331.50,349.17 332.00,350.89 332.50,352.45 333.00,353.86 333.50,355.10 334.00,356.18 334.50,357.09 335.00,357.83 335.50,358.40 336.00,358.81 336.50,359.04 337.00,359.10 337.50,358.99 338.00,358.70 338.50,358.25 339.00,357.62 339.50,356.83 340.00,355.87 340.50,354.74 341.00,353.45 341.50,352.00 342.00,350.39 342.50,348.62 343.00,346.70 343.50,344.63 344.00,342.41 344.50,340.05 345.00,337.55 345.50,334.92 346.00,332.16 346.50,329.27 347.00,326.27 347.50,323.15 348.00,319.93 348.50,316.60 349.00,313.18 349.50,309.66 350.00,306.06 350.50,302.39 351.00,298.64 351.50,294.83 352.00,290.96 352.50,287.03 353.00,283.07 353.50,279.06 354.00,275.03 354.50,270.97 355.00,266.90 355.50,262.82 356.00,258.73 356.50,254.66 357.00,250.59 357.50,246.55 358.00,242.53 358.50,238.55 359.00,234.61 359.50,230.72 360.00,226.88 360.50,223.10 361.00,219.40 361.50,215.77 362.00,212.22 362.50,208.76 363.00,205.39 363.50,202.12 364.00,198.96 364.50,195.91 365.00,192.98 365.50,190.17 366.00,187.49 366.50,184.93 367.00,182.52 367.50,180.24 368.00,178.11 368.50,176.13 369.00,174.30 369.50,172.63 370.00,171.11 370.50,169.75 371.00,168.56 371.50,167.53 372.00,166.67 372.50,165.98 373.00,165.46 373.50,165.11 374.00,164.93 374.50,164.92 375.00,165.08 375.50,165.41 376.00,165.92 376.50,166.60 377.00,167.44 377.50,168.45 378.00,169.63 378.50,170.97 379.00,172.47 379.50,174.13 380.00,175.94 380.50,177.91 381.00,180.02 381.50,182.29 382.00,184.69 382.50,187.22 383.00,189.90 383.50,192.69 384.00,195.61 384.50,198.65 385.00,201.80 385.50,205.06 386.00,208.42 386.50,211.87 387.00,215.41 387.50,219.03 388.00,222.73 388.50,226.50 389.00,230.33 389.50,234.22 390.00,238.15 390.50,242.13 391.00,246.15 391.50,250.19 392.00,254.25 392.50,258.33 393.00,262.41 393.50,266.49 394.00,270.56 394.50,274.62 395.00,278.66 395.50,282.67 396.00,286.64 396.50,290.56 397.00,294.44 397.50,298.26 398.00,302.02 398.50,305.70 399.00,309.31 399.50,312.83 400.00,316.26 400.50,319.60 401.00,322.84 401.50,325.96 402.00,328.98 402.50,331.88 403.00,334.65 403.50,337.29 404.00,339.80 404.50,342.18 405.00,344.41 405.50,346.50 406.00,348.43 406.50,350.22 407.00,351.84 407.50,353.31 408.00,354.62 408.50,355.76 409.00,356.74 409.50,357.55 410.00,358.19 410.50,358.67 411.00,358.97 411.50,359.09 412.00,359.05 412.50,358.84 413.00,358.45 413.50,357.89 414.00,357.17 414.50,356.27 415.00,355.21 415.50,353.99 416.00,352.60 416.50,351.05 417.00,349.34 417.50,347.48 418.00,345.47 418.50,343.31 419.00,341.01 419.50,338.57 420.00,335.99 420.50,333.28 421.00,330.44 421.50,327.49 422.00,324.41 422.50,321.23 423.00,317.94 423.50,314.56 424.00,311.08 424.50,307.51 425.00,303.87 425.50,300.15 426.00,296.36 426.50,292.51 427.00,288.61 427.50,284.66 428.00,280.67 428.50,276.65 429.00,272.60 429.50,268.53 430.00,264.45 430.50,260.37 431.00,256.29 431.50,252.22 432.00,248.16 432.50,244.13 433.00,240.14 433.50,236.18 434.00,232.27 434.50,228.41 435.00,224.61 435.50,220.87 436.00,217.21 436.50,213.63 437.00,210.13 437.50,206.72 438.00,203.42 438.50,200.21 439.00,197.12 439.50,194.14 440.00,191.28 440.50,188.54 441.00,185.94 441.50,183.47 442.00,181.14 442.50,178.95 443.00,176.91 443.50,175.02 444.00,173.28 444.50,171.70 445.00,170.28 445.50,169.02 446.00,167.92 446.50,167.00 447.00,166.24 447.50,165.65 448.00,165.23 448.50,164.98 449.00,164.90 449.50,164.99 450.00,165.26 450.50,165.70 451.00,166.31 451.50,167.08 452.00,168.03 452.50,169.14 453.00,170.41 453.50,171.85 454.00,173.44 454.50,175.20 455.00,177.10 455.50,179.16 456.00,181.36 456.50,183.71 457.00,186.19 457.50,188.81 458.00,191.56 458.50,194.43 459.00,197.42 459.50,200.53 460.00,203.74 460.50,207.06 461.00,210.48 461.50,213.98 462.00,217.57 462.50,221.24 463.00,224.98 463.50,228.79 464.00,232.66 464.50,236.57 465.00,240.54 465.50,244.54 466.00,248.57 466.50,252.62 467.00,256.69 467.50,260.77 468.00,264.86 468.50,268.94 469.00,273.00 469.50,277.05 470.00,281.07 470.50,285.05 471.00,289.00 471.50,292.90 472.00,296.74 472.50,300.52 473.00,304.24 473.50,307.87 474.00,311.43 474.50,314.90 475.00,318.28 475.50,321.56 476.00,324.73 476.50,327.79 477.00,330.73 477.50,333.56 478.00,336.25 478.50,338.82 479.00,341.25 479.50,343.53 480.00,345.68 480.50,347.68 481.00,349.52 481.50,351.21 482.00,352.75 482.50,354.12 483.00,355.33 483.50,356.37 484.00,357.25 484.50,357.96 485.00,358.50 485.50,358.87 486.00,359.06 486.50,359.09 487.00,358.94 487.50,358.63 488.00,358.14 488.50,357.48 489.00,356.65 489.50,355.66 490.00,354.50 490.50,353.17 491.00,351.69 491.50,350.05 492.00,348.25 492.50,346.29 493.00,344.19 493.50,341.95 494.00,339.56 494.50,337.04 495.00,334.38 495.50,331.59 496.00,328.68 496.50,325.66 497.00,322.52 497.50,319.27 498.00,315.92 498.50,312.48 499.00,308.95 499.50,305.33 500.00,301.64 500.50,297.88 501.00,294.06 501.50,290.17 502.00,286.24 502.50,282.27 503.00,278.26 503.50,274.22 504.00,270.16 504.50,266.08 505.00,262.00 505.50,257.92 506.00,253.84 506.50,249.78 507.00,245.74 507.50,241.73 508.00,237.76 508.50,233.83 509.00,229.94 509.50,226.12 510.00,222.36 510.50,218.67 511.00,215.05 511.50,211.52 512.00,208.08 512.50,204.73 513.00,201.48 513.50,198.34 514.00,195.32 514.50,192.41 515.00,189.62 515.50,186.96 516.00,184.44 516.50,182.05 517.00,179.81 517.50,177.71 518.00,175.75 518.50,173.95 519.00,172.31 519.50,170.83 520.00,169.50 520.50,168.34 521.00,167.35 521.50,166.52 522.00,165.86 522.50,165.37 523.00,165.06 523.50,164.91 524.00,164.94 524.50,165.13 525.00,165.50 525.50,166.04 526.00,166.75 526.50,167.63 527.00,168.67 527.50,169.88 528.00,171.25 528.50,172.79 529.00,174.48 529.50,176.32 530.00,178.32 530.50,180.47 531.00,182.75 531.50,185.18 532.00,187.75 532.50,190.44 533.00,193.27 533.50,196.21 534.00,199.27 534.50,202.44 535.00,205.72 535.50,209.10 536.00,212.57 536.50,216.13 537.00,219.76 537.50,223.48 538.00,227.26 538.50,231.10 539.00,235.00 539.50,238.95 540.00,242.93 540.50,246.95 541.00,251.00 541.50,255.06 542.00,259.14 542.50,263.23 543.00,267.31 543.50,271.38 544.00,275.43 544.50,279.46 545.00,283.46 545.50,287.43 546.00,291.34 546.50,295.21 547.00,299.02 547.50,302.76 548.00,306.43 548.50,310.02 549.00,313.52 549.50,316.94 550.00,320.26 550.50,323.47 551.00,326.58 551.50,329.57 552.00,332.44 552.50,335.19 553.00,337.81 553.50,340.29 554.00,342.64 554.50,344.84 555.00,346.90 555.50,348.80 556.00,350.56 556.50,352.15 557.00,353.59 557.50,354.86 558.00,355.97 558.50,356.92 559.00,357.69 559.50,358.30 560.00,358.74 560.50,359.01 561.00,359.10 561.50,359.02 562.00,358.77 562.50,358.35 563.00,357.76 563.50,357.00 564.00,356.08 564.50,354.98 565.00,353.72 565.50,352.30 566.00,350.72 566.50,348.98 567.00,347.09 567.50,345.05 568.00,342.86 568.50,340.53 569.00,338.06 569.50,335.46 570.00,332.72 570.50,329.86 571.00,326.88 571.50,323.79 572.00,320.58 572.50,317.28 573.00,313.87 573.50,310.37 574.00,306.79 574.50,303.13 575.00,299.39 575.50,295.59 576.00,291.73 576.50,287.82 577.00,283.86 577.50,279.87 578.00,275.84 578.50,271.78 579.00,267.71 579.50,263.63 580.00,259.55 580.50,255.47 581.00,251.40 581.50,247.35 582.00,243.33 582.50,239.34 583.00,235.39 583.50,231.49 584.00,227.64 584.50,223.85 585.00,220.13 585.50,216.49 586.00,212.92 586.50,209.44 587.00,206.06 587.50,202.77 588.00,199.59 588.50,196.51 589.00,193.56 589.50,190.72 590.00,188.01 590.50,185.43 591.00,182.99 591.50,180.69 592.00,178.53 592.50,176.52 593.00,174.66 593.50,172.95 594.00,171.40 594.50,170.01 595.00,168.79 595.50,167.73 596.00,166.83 596.50,166.11 597.00,165.55 597.50,165.16 598.00,164.95 598.50,164.91 599.00,165.03 599.50,165.33 600.00,165.81 600.50,166.45 601.00,167.26 601.50,168.24 602.00,169.38 602.50,170.69 603.00,172.16 603.50,173.78 604.00,175.57 604.50,177.50 605.00,179.59 605.50,181.82 606.00,184.20 606.50,186.71 607.00,189.35 607.50,192.12 608.00,195.02 608.50,198.04 609.00,201.16 609.50,204.40 610.00,207.74 610.50,211.17 611.00,214.69 611.50,218.30 612.00,221.98 612.50,225.74 613.00,229.56 613.50,233.44 614.00,237.36 614.50,241.33 615.00,245.34 615.50,249.38 616.00,253.44 616.50,257.51 617.00,261.59 617.50,265.67 618.00,269.75 618.50,273.81 619.00,277.85 619.50,281.87 620.00,285.85 620.50,289.78 621.00,293.67 621.50,297.50 622.00,301.27 622.50,304.97 623.00,308.59 623.50,312.13 624.00,315.58 624.50,318.94 625.00,322.20 625.50,325.35 626.00,328.39 626.50,331.31 627.00,334.10 627.50,336.78 628.00,339.31 628.50,341.71 629.00,343.98 629.50,346.09 630.00,348.06 630.50,349.87 631.00,351.53 631.50,353.03 632.00,354.37 632.50,355.55 633.00,356.56 633.50,357.40 634.00,358.08 634.50,358.59 635.00,358.92 635.50,359.08 636.00,359.07 636.50,358.89 637.00,358.54 637.50,358.02 638.00,357.33 638.50,356.47 639.00,355.44 639.50,354.25 640.00,352.89 640.50,351.37 641.00,349.70 641.50,347.87 642.00,345.89 642.50,343.76 643.00,341.48 643.50,339.07 644.00,336.51 644.50,333.83 645.00,331.02 645.50,328.09 646.00,325.04 646.50,321.88 647.00,318.61 647.50,315.24 648.00,311.78 648.50,308.23 649.00,304.60 649.50,300.90 650.00,297.12 650.50,293.28 651.00,289.39 651.50,285.45 652.00,281.47 652.50,277.45 653.00,273.41 653.50,269.34 654.00,265.27 654.50,261.18 655.00,257.10 655.50,253.03 656.00,248.97 656.50,244.94 657.00,240.93 657.50,236.97 658.00,233.04 658.50,229.17 659.00,225.36 659.50,221.61 660.00,217.94 660.50,214.34 661.00,210.82 661.50,207.40 662.00,204.07 662.50,200.85 663.00,197.73 663.50,194.73 664.00,191.84 664.50,189.08 665.00,186.45 665.50,183.95 666.00,181.59 666.50,179.37 667.00,177.30 667.50,175.38 668.00,173.61 668.50,172.00 669.00,170.55 669.50,169.26 670.00,168.13 670.50,167.17 671.00,166.38 671.50,165.75 672.00,165.30 672.50,165.01 673.00,164.90 673.50,164.96 674.00,165.19 674.50,165.60 675.00,166.17 675.50,166.91 676.00,167.82 676.50,168.90 677.00,170.14 677.50,171.55 678.00,173.11 678.50,174.83 679.00,176.71 679.50,178.74 680.00,180.91 680.50,183.23 681.00,185.69 681.50,188.28 682.00,191.00 682.50,193.85 683.00,196.82 683.50,199.90 684.00,203.09 684.50,206.39 685.00,209.79 685.50,213.27 686.00,216.85 686.50,220.50 687.00,224.23 687.50,228.02 688.00,231.88 688.50,235.79 689.00,239.74 689.50,243.73 690.00,247.76 690.50,251.81 691.00,255.88 691.50,259.96 692.00,264.04 692.50,268.12 693.00,272.19 693.50,276.24 694.00,280.27 694.50,284.26 695.00,288.21 695.50,292.12 696.00,295.98 696.50,299.77 697.00,303.50 697.50,307.15 698.00,310.73 698.50,314.21 699.00,317.61 699.50,320.91 700.00,324.10 700.50,327.18 701.00,330.15 701.50,333.00 702.00,335.72 702.50,338.31 703.00,340.77 703.50,343.09 704.00,345.26 704.50,347.29 705.00,349.17 705.50,350.89 706.00,352.45 706.50,353.86 707.00,355.10 707.50,356.18 708.00,357.09 708.50,357.83 709.00,358.40 709.50,358.81 710.00,359.04 710.50,359.10 711.00,358.99 711.50,358.70 712.00,358.25 712.50,357.62 713.00,356.83 713.50,355.87 714.00,354.74 714.50,353.45 715.00,352.00 715.50,350.39 716.00,348.62 716.50,346.70 717.00,344.63 717.50,342.41 718.00,340.05 718.50,337.55 719.00,334.92 719.50,332.16 720.00,329.27 720.50,326.27 721.00,323.15 721.50,319.93 722.00,316.60 722.50,313.18 723.00,309.66 723.50,306.06 724.00,302.39 724.50,298.64 725.00,294.83 725.50,290.96 726.00,287.03 726.50,283.07 727.00,279.06 727.50,275.03 728.00,270.97 728.50,266.90 729.00,262.82 729.50,258.73 730.00,254.66 730.50,250.59 731.00,246.55 731.50,242.53 732.00,238.55 732.50,234.61 733.00,230.72 733.50,226.88 734.00,223.10 734.50,219.40 735.00,215.77 735.50,212.22 736.00,208.76 736.50,205.39 737.00,202.12 737.50,198.96 738.00,195.91 738.50,192.98 739.00,190.17 739.50,187.49 740.00,184.93 740.50,182.52 741.00,180.24 741.50,178.11 742.00,176.13 742.50,174.30 743.00,172.63 743.50,171.11 744.00,169.75 744.50,168.56 745.00,167.53 745.50,166.67 746.00,165.98 746.50,165.46 747.00,165.11 747.50,164.93 748.00,164.92 748.50,165.08 749.00,165.41 749.50,165.92 750.00,166.60 750.50,167.44 751.00,168.45 751.50,169.63 752.00,170.97 752.50,172.47 753.00,174.13 753.50,175.94 754.00,177.91 754.50,180.02 755.00,182.29 755.50,184.69 756.00,187.22 756.50,189.90 757.00,192.69 757.50,195.61 758.00,198.65 758.50,201.80 759.00,205.06 759.50,208.42 760.00,211.87 760.50,215.41 761.00,219.03 761.50,222.73 762.00,226.50 762.50,230.33 763.00,234.22 763.50,238.15 764.00,242.13 764.50,246.15 765.00,250.19 765.50,254.25 766.00,258.33 766.50,262.41 767.00,266.49 767.50,270.56 768.00,274.62 768.50,278.66 769.00,282.67 769.50,286.64 770.00,290.56 770.50,294.44 771.00,298.26 771.50,302.02 772.00,305.70 772.50,309.31 773.00,312.83 773.50,316.26 774.00,319.60 774.50,322.84 775.00,325.96 775.50,328.98 776.00,331.88 776.50,334.65 777.00,337.29 777.50,339.80 778.00,342.18 778.50,344.41 779.00,346.50 779.50,348.43 780.00,350.22 780.50,351.84 781.00,353.31 781.50,354.62 782.00,355.76 782.50,356.74 783.00,357.55 783.50,358.19 784.00,358.67 784.50,358.97 785.00,359.09 785.50,359.05 786.00,358.84 786.50,358.45 787.00,357.89 787.50,357.17 788.00,356.27 788.50,355.21 789.00,353.99 789.50,352.60 790.00,351.05 790.50,349.34 791.00,347.48 791.50,345.47 792.00,343.31 792.50,341.01 793.00,338.57 793.50,335.99 794.00,333.28 794.50,330.44 795.00,327.49 795.50,324.41 796.00,321.23 796.50,317.94 797.00,314.56 797.50,311.08 798.00,307.51 798.50,303.87 799.00,300.15 799.50,296.36 800.00,292.51 800.50,288.61 801.00,284.66 801.50,280.67 802.00,276.65 802.50,266.00" fill="none" stroke="#ff0000" stroke-width="1" stroke-linejoin="round" shape-rendering="crispEdges" />
<path d="M808,999 v0" />
<rect x="56" y="771" width="747" height="1" fill="#00ff00"/>
<rect x="391" y="772" width="2" height="1" fill="#00ff00"/>
<rect x="464" y="772" width="6" height="1" fill="#00ff00"/>
<rect x="109" y="772" width="1" height="1" fill="#00ff00"/>
<rect x="608" y="772" width="1" height="1" fill="#00ff00"/>
<rect x="434" y="772" width="5" height="1" fill="#00ff00"/>
<rect x="119" y="772" width="5" height="1" fill="#00ff00"/>
<rect x="279" y="772" width="1" height="1" fill="#00ff00"/>
<rect x="148" y="772" width="4" height="1" fill="#00ff00"/>
<rect x="488" y="772" width="1" height="1" fill="#00ff00"/>
<rect x="306" y="772" width="1" height="1" fill="#00ff00"/>
<rect x="624" y="772" width="4" height="1" fill="#00ff00"/>
<rect x="120" y="772" width="5" height="1" fill="#00ff00"/>
<rect x="186" y="772" width="2" height="1" fill="#00ff00"/>
<rect x="705" y="772" width="6" height="1" fill="#00ff00"/>
<rect x="656" y="772" width="1" height="1" fill="#00ff00"/>
<rect x="650" y="772" width="5" height="1" fill="#00ff00"/>
<rect x="466" y="772" width="1" height="1" fill="#00ff00"/>
<rect x="286" y="772" width="1" height="1" fill="#00ff00"/>
<rect x="630" y="772" width="2" height="1" fill="#00ff00"/>
<rect x="356" y="772" width="4" height="1" fill="#00ff00"/>
<rect x="207" y="772" width="5" height="1" fill="#00ff00"/>
<rect x="180" y="772" width="5" height="1" fill="#00ff00"/>
<rect x="375" y="772" width="5" height="1" fill="#00ff00"/>
<rect x="758" y="772" width="2" height="1" fill="#00ff00"/>
<rect x="165" y="772" width="5" height="1" fill="#00ff00"/>
<rect x="644" y="772" width="6" height="1" fill="#00ff00"/>
<rect x="252" y="772" width="3" height="1" fill="#00ff00"/>
<rect x="159" y="772" width="5" height="1" fill="#00ff00"/>
<rect x="789" y="772" width="1" height="1" fill="#00ff00"/>
<rect x="637" y="772" width="1" height="1" fill="#00ff00"/>
<rect x="693" y="772" width="2" height="1" fill="#00ff00"/>
<rect x="568" y="772" width="6" height="1" fill="#00ff00"/>
<rect x="604" y="772" width="4" height="1" fill="#00ff00"/>
<rect x="381" y="772" width="4" height="1" fill="#00ff00"/>
<rect x="659" y="772" width="4" height="1" fill="#00ff00"/>
<rect x="430" y="772" width="3" height="1" fill="#00ff00"/>
<rect x="314" y="772" width="2" height="1" fill="#00ff00"/>
<rect x="775" y="772" width="2" height="1" fill="#00ff00"/>
<rect x="143" y="772" width="5" height="1" fill="#00ff00"/>
<rect x="367" y="772" width="5" height="1" fill="#00ff00"/>
<rect x="566" y="772" width="3" height="1" fill="#00ff00"/>
<rect x="519" y="772" width="3" height="1" fill="#00ff00"/>
<rect x="683" y="772" width="1" height="1" fill="#00ff00"/>
<rect x="180" y="772" width="5" height="1" fill="#00ff00"/>
<rect x="488" y="772" width="2" height="1" fill="#00ff00"/>
<rect x="410" y="772" width="2" height="1" fill="#00ff00"/>
<rect x="560" y="772" width="4" height="1" fill="#00ff00"/>
<rect x="100" y="772" width="6" height="1" fill="#00ff00"/>
<rect x="139" y="772" width="5" height="1" fill="#00ff00"/>
<rect x="646" y="772" width="3" height="1" fill="#00ff00"/>
<rect x="408" y="772" width="6" height="1" fill="#00ff00"/>
<rect x="418" y="772" width="5" height="1" fill="#00ff00"/>
<rect x="568" y="772" width="5" height="1" fill="#00ff00"/>
<rect x="527" y="772" width="1" height="1" fill="#00ff00"/>
<rect x="155" y="772" width="3" height="1" fill="#00ff00"/>
<rect x="545" y="772" width="6" height="1" fill="#00ff00"/>
<rect x="740" y="772" width="1" height="1" fill="#00ff00"/>
<rect x="122" y="772" width="6" height="1" fill="#00ff00"/>
<rect x="778" y="772" width="3" height="1" fill="#00ff00"/>
<rect x="722" y="772" width="5" height="1" fill="#00ff00"/>
<path d="M51,257 L56.5,262 L51,267 Z" fill="#ff0000"/>
<path d="M51,767 L56.5,772 L51,777 Z" fill="#00ff00"/>
<path d="M816,478 L811,483 L816,487 Z" fill="#ff0000"/>
<path d="M822,488.5 H826.5 V478.0 H831.5 V488.5 H834" fill="none" stroke="#ff0000" stroke-width="1"/>
<path d="M842,479 L845.5,483 L842,486 L838.5,483 Z" fill="#ff0000"/>
<path d="M816,986 L811,991 L816,995 Z" fill="#00ff00"/>
<path d="M822,996.5 H826.5 V986.0 H831.5 V996.5 H834" fill="none" stroke="#00ff00" stroke-width="1"/>
<path d="M842,987 L845.5,991 L842,994 L838.5,991 Z" fill="#00ff00"/>
<clipPath id="ctop"><rect x="914" y="31" width="750" height="462"/></clipPath>
<polyline points="914.20,413.30 928.50,422.30 945.80,434.20 955.20,448.30 985.00,494.50 999.00,470.20 1010.40,465.40 1020.80,466.50 1037.50,460.20 1045.80,465.40 1052.70,494.50 1062.50,427.50 1068.00,400.00 1074.00,381.70 1079.60,375.80 1083.00,377.50 1086.50,381.70 1090.00,398.00 1093.75,423.30 1098.30,494.50 1104.00,494.50 1105.80,489.00 1107.00,494.50 1129.10,494.50 1131.00,478.00 1134.20,469.40 1137.00,478.00 1140.00,494.50 1146.70,494.50 1151.10,476.70 1153.30,476.10 1155.60,478.30 1157.60,472.20 1158.90,459.40 1160.60,435.60 1162.20,422.20 1164.40,410.00 1166.70,422.20 1168.30,436.70 1170.00,465.60 1172.00,494.50 1184.20,494.50 1187.60,480.60 1190.00,494.50 1193.30,486.10 1194.40,494.50 1201.30,494.50 1201.70,452.80 1202.80,425.00 1204.40,426.10 1206.10,446.70 1207.20,473.30 1207.80,494.50 1226.40,494.50 1229.40,463.90 1231.70,494.50 1234.40,487.20 1236.00,494.50 1238.30,490.00 1240.00,494.50 1247.20,494.50 1249.10,467.20 1251.70,494.50 1262.55,494.50 1263.75,457.00 1264.95,494.50 1266.80,494.50 1268.00,485.00 1269.20,494.50 1275.80,494.50 1277.00,463.30 1278.20,494.50 1279.80,494.50 1281.00,488.00 1282.20,494.50 1282.80,494.50 1284.00,469.00 1285.20,494.50 1285.50,494.50 1286.70,473.00 1287.90,494.50 1288.40,494.50 1289.60,475.40 1290.80,494.50 1290.80,494.50 1292.00,483.00 1292.80,494.50 1293.20,494.50 1294.00,487.00 1295.20,494.50 1296.30,494.50 1297.50,470.00 1298.70,494.50 1298.80,494.50 1300.00,480.00 1301.20,494.50 1302.10,494.50 1303.30,466.25 1304.20,494.50 1304.50,494.50 1305.40,457.00 1306.60,494.50 1308.50,494.50 1309.50,340.00 1309.50,192.00 1310.50,188.00 1310.50,205.00 1311.50,340.00 1311.50,494.50 1313.40,494.50 1314.60,462.00 1315.80,494.50 1316.80,494.50 1318.00,480.00 1319.20,494.50 1320.05,494.50 1321.25,467.00 1322.45,494.50 1322.80,494.50 1324.00,484.00 1325.20,494.50 1326.30,494.50 1327.50,457.00 1328.70,494.50 1328.80,494.50 1330.00,486.00 1331.20,494.50 1332.10,494.50 1333.30,457.00 1334.50,494.50 1337.55,494.50 1338.75,474.00 1339.95,494.50 1343.40,494.50 1344.60,483.00 1345.80,494.50 1347.10,494.50 1348.30,481.00 1349.50,494.50 1354.80,494.50 1356.00,489.00 1357.20,494.50 1358.80,494.50 1360.00,490.00 1361.20,494.50 1362.70,494.50 1363.20,438.40 1363.70,352.30 1364.20,443.40 1364.70,494.50 1394.30,494.50 1394.80,428.25 1395.30,332.00 1395.80,433.25 1396.30,494.50 1416.30,494.50 1416.80,441.40 1417.30,358.30 1417.80,446.40 1418.30,494.50 1433.70,494.50 1434.20,460.75 1434.70,397.00 1435.20,465.75 1435.70,494.50 1447.90,494.50 1448.40,471.35 1448.90,418.20 1449.40,476.35 1449.90,494.50 1459.40,494.50 1459.90,469.25 1460.40,414.00 1460.90,474.25 1461.40,494.50 1469.70,494.50 1470.20,467.25 1470.70,410.00 1471.20,472.25 1471.70,494.50 1478.60,494.50 1479.10,464.25 1479.60,404.00 1480.10,469.25 1480.60,494.50 1486.60,494.50 1487.10,468.70 1487.60,412.90 1488.10,473.70 1488.60,494.50 1494.40,494.50 1494.90,478.70 1495.40,432.90 1495.90,483.70 1496.40,494.50 1501.40,494.50 1501.90,483.20 1502.40,441.90 1502.90,488.20 1503.40,494.50 1507.40,494.50 1507.90,489.15 1508.40,453.80 1508.90,494.15 1509.40,494.50 1512.50,494.50 1513.00,494.50 1513.50,468.00 1514.00,494.50 1514.50,494.50 1518.60,494.50 1519.10,485.80 1519.60,447.10 1520.10,490.80 1520.60,494.50 1523.40,494.50 1523.90,478.20 1524.40,431.90 1524.90,483.20 1525.40,494.50 1527.60,494.50 1528.10,489.75 1528.60,455.00 1529.10,494.50 1529.60,494.50 1532.50,494.50 1533.00,494.50 1533.50,480.00 1534.00,494.50 1534.50,494.50 1536.50,494.50 1537.00,494.50 1537.50,485.20 1538.00,494.50 1538.50,494.50 1540.60,494.50 1541.10,494.50 1541.60,477.00 1542.10,494.50 1542.60,494.50 1544.30,494.50 1544.80,494.50 1545.30,473.00 1545.80,494.50 1546.30,494.50 1547.60,494.50 1548.10,494.50 1548.60,470.80 1549.10,494.50 1549.60,494.50 1551.60,494.50 1552.10,494.50 1552.60,470.80 1553.10,494.50 1553.60,494.50 1554.60,494.50 1555.10,494.50 1555.60,485.20 1556.10,494.50 1556.60,494.50 1566.40,494.50 1566.90,494.50 1567.40,490.00 1567.90,494.50 1568.40,494.50 1599.40,494.50 1599.90,494.50 1600.40,478.00 1600.90,494.50 1601.40,494.50 1614.60,494.50 1615.10,492.85 1615.60,461.20 1616.10,494.50 1616.60,494.50 1634.00,494.50 1635.50,488.00 1637.00,494.50 1649.00,494.50 1650.50,487.00 1652.00,494.50 1653.50,485.00 1655.00,488.00 1656.50,494.50 1663.00,494.50" fill="none" stroke="#00ff00" stroke-width="1" stroke-linejoin="round" shape-rendering="crispEdges" clip-path="url(#ctop)"/>
<polyline points="914.20,860.60 927.00,862.30 947.90,864.80 967.70,871.00 983.30,868.30 1000.00,864.20 1010.40,866.90 1030.80,902.30 1038.50,874.20 1046.50,866.25 1053.10,871.00 1058.30,886.70 1064.60,929.40 1070.80,917.90 1079.20,894.00 1086.50,889.20 1095.80,897.50 1105.20,894.00 1112.50,921.00 1118.75,893.30 1124.00,894.00 1128.10,890.40 1137.50,912.70 1141.70,903.30 1145.80,937.70 1151.00,883.50 1158.30,910.60 1162.50,916.25 1167.70,905.40 1174.60,952.30 1179.20,908.50 1184.40,980.40 1187.50,911.70 1190.60,927.30 1193.75,903.30 1197.50,957.50 1202.00,907.50 1206.70,898.75 1210.80,946.00 1212.00,938.74 1213.82,920.61 1215.93,933.41 1217.90,920.01 1219.82,914.52 1220.90,914.99 1222.52,933.34 1224.22,912.41 1226.61,934.65 1227.93,917.20 1229.49,937.31 1231.68,923.04 1233.34,936.87 1235.43,923.21 1237.78,942.21 1238.92,926.79 1240.70,941.10 1241.89,923.39 1243.18,944.91 1245.42,923.40 1247.32,933.07 1248.68,915.12 1249.79,930.31 1251.63,915.42 1253.43,936.00 1255.70,913.08 1257.74,937.40 1259.97,915.66 1261.03,932.85 1263.18,918.72 1265.19,935.33 1267.38,922.53 1268.67,938.17 1269.75,925.22 1271.26,943.15 1273.23,919.28 1275.50,915.00 1277.18,913.24 1278.28,933.93 1280.27,913.08 1282.23,937.67 1284.33,914.92 1285.87,937.15 1287.76,916.92 1289.79,939.82 1290.91,946.73 1292.23,942.56 1294.52,942.85 1295.81,940.66 1297.42,927.31 1299.03,945.77 1300.57,925.29 1302.26,942.92 1304.59,926.96 1305.98,938.67 1307.42,920.72 1308.52,915.10 1309.00,930.00 1309.30,840.00 1309.50,762.00 1310.00,751.00 1311.00,755.00 1311.50,835.00 1311.70,870.00 1311.96,930.53 1312.00,935.00 1313.16,921.24 1315.04,934.91 1316.32,916.81 1318.32,932.37 1320.29,920.84 1321.84,938.85 1324.15,925.36 1326.42,936.90 1328.54,919.96 1329.82,939.70 1331.83,925.51 1334.20,939.87 1336.40,923.50 1338.17,914.61 1339.26,919.59 1341.36,933.46 1343.54,918.64 1345.86,930.66 1347.27,916.41 1349.45,932.18 1351.63,920.37 1353.37,935.43 1355.07,952.19 1356.63,940.39 1358.60,928.50 1360.94,939.08 1362.30,925.00 1363.10,902.00 1363.50,892.00 1363.90,904.00 1364.70,930.00 1365.17,942.03 1367.14,939.69 1368.28,928.77 1369.56,940.82 1371.14,925.15 1373.02,940.73 1374.88,921.87 1377.01,937.43 1378.32,920.64 1379.65,940.99 1381.82,925.59 1383.38,942.25 1385.66,922.59 1387.72,941.29 1388.87,927.82 1390.66,935.89 1392.84,918.92 1393.93,939.93 1394.30,925.00 1395.10,872.50 1395.50,862.50 1395.90,874.50 1396.70,930.00 1398.04,919.45 1399.27,951.50 1401.26,918.45 1403.10,935.84 1404.46,919.45 1406.03,939.82 1408.10,921.48 1409.20,918.29 1411.09,924.29 1413.03,942.29 1414.57,921.55 1416.40,925.00 1417.20,890.00 1417.60,880.00 1418.00,892.00 1418.80,930.00 1419.13,934.74 1420.85,917.04 1422.74,931.79 1423.80,917.57 1425.04,936.25 1427.36,923.48 1428.87,937.19 1430.27,919.22 1431.33,941.61 1433.38,926.39 1434.48,939.97 1436.84,922.01 1438.86,933.07 1440.70,916.51 1441.77,932.37 1443.71,917.49 1445.30,933.89 1447.63,915.20 1449.88,933.29 1451.84,918.79 1453.89,933.68 1456.17,940.48 1457.77,940.16 1458.87,922.54 1460.39,937.05 1462.44,917.99 1464.57,934.12 1466.16,918.60 1468.08,930.95 1470.37,920.58 1472.59,934.53 1474.27,923.35 1475.38,938.79 1476.80,925.04 1478.30,942.33 1480.30,924.63 1482.58,938.68 1484.02,924.46 1485.37,937.08 1486.91,924.59 1488.67,938.78 1490.73,920.95 1492.49,932.27 1494.62,921.56 1495.73,931.94 1497.62,922.43 1498.96,928.56 1501.03,920.21 1502.98,928.53 1504.97,920.39 1507.16,931.80 1509.50,921.37 1511.63,932.05 1513.66,923.58 1515.26,931.40 1516.69,924.55 1517.94,930.17 1520.22,924.66 1521.52,932.62 1522.78,922.39 1524.21,930.17 1525.58,917.88 1527.35,930.07 1528.42,915.84 1530.15,925.32 1531.49,919.21 1533.60,927.55 1534.82,918.02 1536.54,927.40 1538.29,913.95 1540.48,925.14 1541.61,917.71 1543.43,928.75 1545.02,915.82 1546.31,927.41 1548.48,918.42 1550.13,927.14 1551.28,916.60 1553.44,928.36 1554.77,910.45 1556.89,921.34 1558.42,914.05 1560.35,921.43 1561.81,911.03 1563.28,923.96 1564.41,912.19 1565.97,923.95 1567.29,914.12 1569.58,920.54 1571.65,909.07 1573.23,917.10 1575.60,909.58 1577.08,919.74 1578.79,908.72 1580.02,920.99 1581.51,910.51 1583.89,920.32 1585.17,910.01 1586.51,920.12 1588.81,910.50 1591.17,917.20 1592.96,908.78 1595.35,918.05 1596.75,905.79 1598.91,914.79 1599.96,907.82 1601.88,913.35 1603.69,901.77 1605.64,909.23 1607.12,899.98 1608.85,908.61 1610.28,895.13 1612.14,905.23 1614.12,889.90 1615.97,895.40 1618.01,882.73 1619.73,881.53 1622.10,863.94 1623.41,871.97 1625.24,867.65 1626.83,873.73 1628.14,865.01 1630.72,873.03 1632.83,859.73 1634.23,867.87 1635.82,858.11 1638.45,861.46 1639.72,854.39 1641.72,864.18 1643.25,861.59 1644.76,876.54 1646.24,871.81 1648.45,883.80 1650.81,871.28 1653.15,873.58 1655.07,868.66 1657.40,877.77 1659.87,876.08 1662.01,886.68" fill="none" stroke="#00ff00" stroke-width="1" stroke-linejoin="round" shape-rendering="crispEdges" />
<text x="1729.00" y="23.00" text-anchor="start" style="font-family:'Liberation Sans', sans-serif;font-size:12px;font-weight:normal" fill="#101010" >Мультиметр 1,2</text>
<text x="1728.00" y="22.00" text-anchor="start" style="font-family:'Liberation Sans', sans-serif;font-size:12px;font-weight:normal" fill="#ffff00" >Мультиметр 1,2</text>
<text x="1731.00" y="37.00" text-anchor="start" style="font-family:'Liberation Sans', sans-serif;font-size:10.5px;font-weight:normal" fill="#101010" >Селективный</text>
<text x="1730.00" y="36.00" text-anchor="start" style="font-family:'Liberation Sans', sans-serif;font-size:10.5px;font-weight:normal" fill="#ffff00" >Селективный</text>
<circle cx="1807.5" cy="31.5" r="5.5" fill="#800080" stroke="#000" stroke-width="1"/>
<path d="M1805,31 q0.5,-2 2.5,-2.5" stroke="#ffc0ff" stroke-width="1" fill="none"/>
<text x="1731.00" y="51.00" text-anchor="start" style="font-family:'Liberation Sans', sans-serif;font-size:10.4px;font-weight:normal" fill="#101010" >Главная частота</text>
<text x="1730.00" y="50.00" text-anchor="start" style="font-family:'Liberation Sans', sans-serif;font-size:10.4px;font-weight:normal" fill="#00ffff" >Главная частота</text>
<text x="0" y="0" transform="translate(1815.00,65.70) scale(1,0.9)" text-anchor="end" style="font-family:'Liberation Mono', monospace;font-size:12px;font-weight:normal" fill="#101010" stroke="#101010" stroke-width="0.12" >999.9996 Hz</text>
<text x="0" y="0" transform="translate(1814.00,64.70) scale(1,0.9)" text-anchor="end" style="font-family:'Liberation Mono', monospace;font-size:12px;font-weight:normal" fill="#00ff00" stroke="#00ff00" stroke-width="0.12" >999.9996 Hz</text>
<text x="0" y="0" transform="translate(1815.00,79.70) scale(1,0.9)" text-anchor="end" style="font-family:'Liberation Mono', monospace;font-size:12px;font-weight:normal" fill="#101010" stroke="#101010" stroke-width="0.12" >1.000000kHz</text>
<text x="0" y="0" transform="translate(1814.00,78.70) scale(1,0.9)" text-anchor="end" style="font-family:'Liberation Mono', monospace;font-size:12px;font-weight:normal" fill="#00ff00" stroke="#00ff00" stroke-width="0.12" >1.000000kHz</text>
<text x="1731.00" y="92.00" text-anchor="start" style="font-family:'Liberation Sans', sans-serif;font-size:10.4px;font-weight:normal" fill="#101010" >Макс. амплитуда</text>
<text x="1730.00" y="91.00" text-anchor="start" style="font-family:'Liberation Sans', sans-serif;font-size:10.4px;font-weight:normal" fill="#00ffff" >Макс. амплитуда</text>
<text x="0" y="0" transform="translate(1815.00,106.70) scale(1,0.9)" text-anchor="end" style="font-family:'Liberation Mono', monospace;font-size:12px;font-weight:normal" fill="#101010" stroke="#101010" stroke-width="0.12" >+420.394mV</text>
<text x="0" y="0" transform="translate(1814.00,105.70) scale(1,0.9)" text-anchor="end" style="font-family:'Liberation Mono', monospace;font-size:12px;font-weight:normal" fill="#00ff00" stroke="#00ff00" stroke-width="0.12" >+420.394mV</text>
<text x="0" y="0" transform="translate(1815.00,120.70) scale(1,0.9)" text-anchor="end" style="font-family:'Liberation Mono', monospace;font-size:12px;font-weight:normal" fill="#101010" stroke="#101010" stroke-width="0.12" >+668.583μV</text>
<text x="0" y="0" transform="translate(1814.00,119.70) scale(1,0.9)" text-anchor="end" style="font-family:'Liberation Mono', monospace;font-size:12px;font-weight:normal" fill="#00ff00" stroke="#00ff00" stroke-width="0.12" >+668.583μV</text>
<text x="1731.00" y="133.00" text-anchor="start" style="font-family:'Liberation Sans', sans-serif;font-size:10.4px;font-weight:normal" fill="#101010" >Ср.кв. напряжени</text>
<text x="1730.00" y="132.00" text-anchor="start" style="font-family:'Liberation Sans', sans-serif;font-size:10.4px;font-weight:normal" fill="#00ffff" >Ср.кв. напряжени</text>
<text x="0" y="0" transform="translate(1815.00,147.70) scale(1,0.9)" text-anchor="end" style="font-family:'Liberation Mono', monospace;font-size:12px;font-weight:normal" fill="#101010" stroke="#101010" stroke-width="0.12" >+297.286mV</text>
<text x="0" y="0" transform="translate(1814.00,146.70) scale(1,0.9)" text-anchor="end" style="font-family:'Liberation Mono', monospace;font-size:12px;font-weight:normal" fill="#00ff00" stroke="#00ff00" stroke-width="0.12" >+297.286mV</text>
<text x="0" y="0" transform="translate(1815.00,161.70) scale(1,0.9)" text-anchor="end" style="font-family:'Liberation Mono', monospace;font-size:12px;font-weight:normal" fill="#101010" stroke="#101010" stroke-width="0.12" >+516.842μV</text>
<text x="0" y="0" transform="translate(1814.00,160.70) scale(1,0.9)" text-anchor="end" style="font-family:'Liberation Mono', monospace;font-size:12px;font-weight:normal" fill="#00ff00" stroke="#00ff00" stroke-width="0.12" >+516.842μV</text>
<text x="1731.00" y="174.00" text-anchor="start" style="font-family:'Liberation Sans', sans-serif;font-size:10.4px;font-weight:normal" fill="#101010" >SNR</text>
<text x="1730.00" y="173.00" text-anchor="start" style="font-family:'Liberation Sans', sans-serif;font-size:10.4px;font-weight:normal" fill="#00ffff" >SNR</text>
<text x="1812.00" y="174.00" text-anchor="end" style="font-family:'Liberation Sans', sans-serif;font-size:10.4px;font-weight:normal" fill="#101010" >low =  2</text>
<text x="1811.00" y="173.00" text-anchor="end" style="font-family:'Liberation Sans', sans-serif;font-size:10.4px;font-weight:normal" fill="#00ffff" >low =  2</text>
<text x="0" y="0" transform="translate(1815.00,188.70) scale(1,0.9)" text-anchor="end" style="font-family:'Liberation Mono', monospace;font-size:12px;font-weight:normal" fill="#101010" stroke="#101010" stroke-width="0.12" >+ 54.89dB</text>
<text x="0" y="0" transform="translate(1814.00,187.70) scale(1,0.9)" text-anchor="end" style="font-family:'Liberation Mono', monospace;font-size:12px;font-weight:normal" fill="#00ff00" stroke="#00ff00" stroke-width="0.12" >+ 54.89dB</text>
<text x="0" y="0" transform="translate(1815.00,202.70) scale(1,0.9)" text-anchor="end" style="font-family:'Liberation Mono', monospace;font-size:12px;font-weight:normal" fill="#101010" stroke="#101010" stroke-width="0.12" >+  7.10dB</text>
<text x="0" y="0" transform="translate(1814.00,201.70) scale(1,0.9)" text-anchor="end" style="font-family:'Liberation Mono', monospace;font-size:12px;font-weight:normal" fill="#00ff00" stroke="#00ff00" stroke-width="0.12" >+  7.10dB</text>
<text x="1731.00" y="215.00" text-anchor="start" style="font-family:'Liberation Sans', sans-serif;font-size:10.4px;font-weight:normal" fill="#101010" >SINAD</text>
<text x="1730.00" y="214.00" text-anchor="start" style="font-family:'Liberation Sans', sans-serif;font-size:10.4px;font-weight:normal" fill="#00ffff" >SINAD</text>
<text x="0" y="0" transform="translate(1815.00,229.70) scale(1,0.9)" text-anchor="end" style="font-family:'Liberation Mono', monospace;font-size:12px;font-weight:normal" fill="#101010" stroke="#101010" stroke-width="0.12" >+ 41.76dB</text>
<text x="0" y="0" transform="translate(1814.00,228.70) scale(1,0.9)" text-anchor="end" style="font-family:'Liberation Mono', monospace;font-size:12px;font-weight:normal" fill="#00ff00" stroke="#00ff00" stroke-width="0.12" >+ 41.76dB</text>
<text x="0" y="0" transform="translate(1815.00,243.70) scale(1,0.9)" text-anchor="end" style="font-family:'Liberation Mono', monospace;font-size:12px;font-weight:normal" fill="#101010" stroke="#101010" stroke-width="0.12" >+  7.09dB</text>
<text x="0" y="0" transform="translate(1814.00,242.70) scale(1,0.9)" text-anchor="end" style="font-family:'Liberation Mono', monospace;font-size:12px;font-weight:normal" fill="#00ff00" stroke="#00ff00" stroke-width="0.12" >+  7.09dB</text>
<text x="1731.00" y="256.00" text-anchor="start" style="font-family:'Liberation Sans', sans-serif;font-size:10.4px;font-weight:normal" fill="#101010" >SFDR</text>
<text x="1730.00" y="255.00" text-anchor="start" style="font-family:'Liberation Sans', sans-serif;font-size:10.4px;font-weight:normal" fill="#00ffff" >SFDR</text>
<text x="0" y="0" transform="translate(1815.00,270.70) scale(1,0.9)" text-anchor="end" style="font-family:'Liberation Mono', monospace;font-size:12px;font-weight:normal" fill="#101010" stroke="#101010" stroke-width="0.12" >43.61dB</text>
<text x="0" y="0" transform="translate(1814.00,269.70) scale(1,0.9)" text-anchor="end" style="font-family:'Liberation Mono', monospace;font-size:12px;font-weight:normal" fill="#00ff00" stroke="#00ff00" stroke-width="0.12" >43.61dB</text>
<text x="0" y="0" transform="translate(1815.00,284.70) scale(1,0.9)" text-anchor="end" style="font-family:'Liberation Mono', monospace;font-size:12px;font-weight:normal" fill="#101010" stroke="#101010" stroke-width="0.12" >30.81dB</text>
<text x="0" y="0" transform="translate(1814.00,283.70) scale(1,0.9)" text-anchor="end" style="font-family:'Liberation Mono', monospace;font-size:12px;font-weight:normal" fill="#00ff00" stroke="#00ff00" stroke-width="0.12" >30.81dB</text>
<text x="1731.00" y="297.00" text-anchor="start" style="font-family:'Liberation Sans', sans-serif;font-size:10.4px;font-weight:normal" fill="#101010" >ENOB . Carrier</text>
<text x="1730.00" y="296.00" text-anchor="start" style="font-family:'Liberation Sans', sans-serif;font-size:10.4px;font-weight:normal" fill="#00ffff" >ENOB . Carrier</text>
<text x="0" y="0" transform="translate(1815.00,311.70) scale(1,0.9)" text-anchor="end" style="font-family:'Liberation Mono', monospace;font-size:12px;font-weight:normal" fill="#101010" stroke="#101010" stroke-width="0.12" >6.6bit</text>
<text x="0" y="0" transform="translate(1814.00,310.70) scale(1,0.9)" text-anchor="end" style="font-family:'Liberation Mono', monospace;font-size:12px;font-weight:normal" fill="#00ff00" stroke="#00ff00" stroke-width="0.12" >6.6bit</text>
<text x="0" y="0" transform="translate(1815.00,325.70) scale(1,0.9)" text-anchor="end" style="font-family:'Liberation Mono', monospace;font-size:12px;font-weight:normal" fill="#101010" stroke="#101010" stroke-width="0.12" >0.8bit</text>
<text x="0" y="0" transform="translate(1814.00,324.70) scale(1,0.9)" text-anchor="end" style="font-family:'Liberation Mono', monospace;font-size:12px;font-weight:normal" fill="#00ff00" stroke="#00ff00" stroke-width="0.12" >0.8bit</text>
<text x="1731.00" y="338.00" text-anchor="start" style="font-family:'Liberation Sans', sans-serif;font-size:10.4px;font-weight:normal" fill="#101010" >THD</text>
<text x="1730.00" y="337.00" text-anchor="start" style="font-family:'Liberation Sans', sans-serif;font-size:10.4px;font-weight:normal" fill="#00ffff" >THD</text>
<text x="1812.00" y="338.00" text-anchor="end" style="font-family:'Liberation Sans', sans-serif;font-size:10.4px;font-weight:normal" fill="#101010" >h = 10</text>
<text x="1811.00" y="337.00" text-anchor="end" style="font-family:'Liberation Sans', sans-serif;font-size:10.4px;font-weight:normal" fill="#00ffff" >h = 10</text>
<text x="0" y="0" transform="translate(1815.00,352.70) scale(1,0.9)" text-anchor="end" style="font-family:'Liberation Mono', monospace;font-size:12px;font-weight:normal" fill="#101010" stroke="#101010" stroke-width="0.12" >0.795634%</text>
<text x="0" y="0" transform="translate(1814.00,351.70) scale(1,0.9)" text-anchor="end" style="font-family:'Liberation Mono', monospace;font-size:12px;font-weight:normal" fill="#00ff00" stroke="#00ff00" stroke-width="0.12" >0.795634%</text>
<text x="0" y="0" transform="translate(1815.00,366.70) scale(1,0.9)" text-anchor="end" style="font-family:'Liberation Mono', monospace;font-size:12px;font-weight:normal" fill="#101010" stroke="#101010" stroke-width="0.12" >2.493266%</text>
<text x="0" y="0" transform="translate(1814.00,365.70) scale(1,0.9)" text-anchor="end" style="font-family:'Liberation Mono', monospace;font-size:12px;font-weight:normal" fill="#00ff00" stroke="#00ff00" stroke-width="0.12" >2.493266%</text>
<text x="1731.00" y="379.00" text-anchor="start" style="font-family:'Liberation Sans', sans-serif;font-size:10.4px;font-weight:normal" fill="#101010" >IMD</text>
<text x="1730.00" y="378.00" text-anchor="start" style="font-family:'Liberation Sans', sans-serif;font-size:10.4px;font-weight:normal" fill="#00ffff" >IMD</text>
<text x="1812.00" y="379.00" text-anchor="end" style="font-family:'Liberation Sans', sans-serif;font-size:10.4px;font-weight:normal" fill="#101010" >h =  5</text>
<text x="1811.00" y="378.00" text-anchor="end" style="font-family:'Liberation Sans', sans-serif;font-size:10.4px;font-weight:normal" fill="#00ffff" >h =  5</text>
<text x="0" y="0" transform="translate(1815.00,393.70) scale(1,0.9)" text-anchor="end" style="font-family:'Liberation Mono', monospace;font-size:12px;font-weight:normal" fill="#101010" stroke="#101010" stroke-width="0.12" >0.772733%</text>
<text x="0" y="0" transform="translate(1814.00,392.70) scale(1,0.9)" text-anchor="end" style="font-family:'Liberation Mono', monospace;font-size:12px;font-weight:normal" fill="#00ff00" stroke="#00ff00" stroke-width="0.12" >0.772733%</text>
<text x="0" y="0" transform="translate(1815.00,407.70) scale(1,0.9)" text-anchor="end" style="font-family:'Liberation Mono', monospace;font-size:12px;font-weight:normal" fill="#101010" stroke="#101010" stroke-width="0.12" >8.123239%</text>
<text x="0" y="0" transform="translate(1814.00,406.70) scale(1,0.9)" text-anchor="end" style="font-family:'Liberation Mono', monospace;font-size:12px;font-weight:normal" fill="#00ff00" stroke="#00ff00" stroke-width="0.12" >8.123239%</text>
<text x="1731.00" y="420.00" text-anchor="start" style="font-family:'Liberation Sans', sans-serif;font-size:10.4px;font-weight:normal" fill="#101010" >Пост. смещение</text>
<text x="1730.00" y="419.00" text-anchor="start" style="font-family:'Liberation Sans', sans-serif;font-size:10.4px;font-weight:normal" fill="#00ffff" >Пост. смещение</text>
<text x="0" y="0" transform="translate(1815.00,434.70) scale(1,0.9)" text-anchor="end" style="font-family:'Liberation Mono', monospace;font-size:12px;font-weight:normal" fill="#101010" stroke="#101010" stroke-width="0.12" >-426.853μV</text>
<text x="0" y="0" transform="translate(1814.00,433.70) scale(1,0.9)" text-anchor="end" style="font-family:'Liberation Mono', monospace;font-size:12px;font-weight:normal" fill="#00ff00" stroke="#00ff00" stroke-width="0.12" >-426.853μV</text>
<text x="0" y="0" transform="translate(1815.00,448.70) scale(1,0.9)" text-anchor="end" style="font-family:'Liberation Mono', monospace;font-size:12px;font-weight:normal" fill="#101010" stroke="#101010" stroke-width="0.12" >-2.92891μV</text>
<text x="0" y="0" transform="translate(1814.00,447.70) scale(1,0.9)" text-anchor="end" style="font-family:'Liberation Mono', monospace;font-size:12px;font-weight:normal" fill="#00ff00" stroke="#00ff00" stroke-width="0.12" >-2.92891μV</text>
<text x="1731.00" y="461.00" text-anchor="start" style="font-family:'Liberation Sans', sans-serif;font-size:10.4px;font-weight:normal" fill="#101010" >Сдвиг фаз R - L</text>
<text x="1730.00" y="460.00" text-anchor="start" style="font-family:'Liberation Sans', sans-serif;font-size:10.4px;font-weight:normal" fill="#00ffff" >Сдвиг фаз R - L</text>
<text x="0" y="0" transform="translate(1815.00,475.70) scale(1,0.9)" text-anchor="end" style="font-family:'Liberation Mono', monospace;font-size:12px;font-weight:normal" fill="#101010" stroke="#101010" stroke-width="0.12" >+ 88.6798°</text>
<text x="0" y="0" transform="translate(1814.00,474.70) scale(1,0.9)" text-anchor="end" style="font-family:'Liberation Mono', monospace;font-size:12px;font-weight:normal" fill="#00ff00" stroke="#00ff00" stroke-width="0.12" >+ 88.6798°</text>
<text x="1731.00" y="488.00" text-anchor="start" style="font-family:'Liberation Sans', sans-serif;font-size:10.4px;font-weight:normal" fill="#101010" >Freq. Ratio  L / R</text>
<text x="1730.00" y="487.00" text-anchor="start" style="font-family:'Liberation Sans', sans-serif;font-size:10.4px;font-weight:normal" fill="#00ffff" >Freq. Ratio  L / R</text>
<text x="0" y="0" transform="translate(1815.00,502.70) scale(1,0.9)" text-anchor="end" style="font-family:'Liberation Mono', monospace;font-size:12px;font-weight:normal" fill="#101010" stroke="#101010" stroke-width="0.12" >9.999994e-01</text>
<text x="0" y="0" transform="translate(1814.00,501.70) scale(1,0.9)" text-anchor="end" style="font-family:'Liberation Mono', monospace;font-size:12px;font-weight:normal" fill="#00ff00" stroke="#00ff00" stroke-width="0.12" >9.999994e-01</text>
<text x="1731.00" y="515.00" text-anchor="start" style="font-family:'Liberation Sans', sans-serif;font-size:10.4px;font-weight:normal" fill="#101010" >Group Delay R - L</text>
<text x="1730.00" y="514.00" text-anchor="start" style="font-family:'Liberation Sans', sans-serif;font-size:10.4px;font-weight:normal" fill="#00ffff" >Group Delay R - L</text>
<text x="0" y="0" transform="translate(1815.00,529.70) scale(1,0.9)" text-anchor="end" style="font-family:'Liberation Mono', monospace;font-size:12px;font-weight:normal" fill="#101010" stroke="#101010" stroke-width="0.12" >+5.7427μs</text>
<text x="0" y="0" transform="translate(1814.00,528.70) scale(1,0.9)" text-anchor="end" style="font-family:'Liberation Mono', monospace;font-size:12px;font-weight:normal" fill="#00ff00" stroke="#00ff00" stroke-width="0.12" >+5.7427μs</text>
<text x="1731.00" y="542.00" text-anchor="start" style="font-family:'Liberation Sans', sans-serif;font-size:10.4px;font-weight:normal" fill="#101010" >Pulse Delay R - L</text>
<text x="1730.00" y="541.00" text-anchor="start" style="font-family:'Liberation Sans', sans-serif;font-size:10.4px;font-weight:normal" fill="#00ffff" >Pulse Delay R - L</text>
<text x="0" y="0" transform="translate(1815.00,556.70) scale(1,0.9)" text-anchor="end" style="font-family:'Liberation Mono', monospace;font-size:12px;font-weight:normal" fill="#101010" stroke="#101010" stroke-width="0.12" >+0.0000 s</text>
<text x="0" y="0" transform="translate(1814.00,555.70) scale(1,0.9)" text-anchor="end" style="font-family:'Liberation Mono', monospace;font-size:12px;font-weight:normal" fill="#00ff00" stroke="#00ff00" stroke-width="0.12" >+0.0000 s</text>
<text x="1731.00" y="569.50" text-anchor="start" style="font-family:'Liberation Sans', sans-serif;font-size:10.4px;font-weight:normal" fill="#101010" >True Delay R - L</text>
<text x="1730.00" y="568.50" text-anchor="start" style="font-family:'Liberation Sans', sans-serif;font-size:10.4px;font-weight:normal" fill="#00ffff" >True Delay R - L</text>
<text x="0" y="0" transform="translate(1815.00,584.20) scale(1,0.9)" text-anchor="end" style="font-family:'Liberation Mono', monospace;font-size:12px;font-weight:normal" fill="#101010" stroke="#101010" stroke-width="0.12" >+5.7427μs</text>
<text x="0" y="0" transform="translate(1814.00,583.20) scale(1,0.9)" text-anchor="end" style="font-family:'Liberation Mono', monospace;font-size:12px;font-weight:normal" fill="#00ff00" stroke="#00ff00" stroke-width="0.12" >+5.7427μs</text>
<text x="1731.00" y="596.00" text-anchor="start" style="font-family:'Liberation Sans', sans-serif;font-size:10.4px;font-weight:normal" fill="#101010" >Вторая частота</text>
<text x="1730.00" y="595.00" text-anchor="start" style="font-family:'Liberation Sans', sans-serif;font-size:10.4px;font-weight:normal" fill="#00ffff" >Вторая частота</text>
<text x="0" y="0" transform="translate(1815.00,610.70) scale(1,0.9)" text-anchor="end" style="font-family:'Liberation Mono', monospace;font-size:12px;font-weight:normal" fill="#101010" stroke="#101010" stroke-width="0.12" >2.999993kHz</text>
<text x="0" y="0" transform="translate(1814.00,609.70) scale(1,0.9)" text-anchor="end" style="font-family:'Liberation Mono', monospace;font-size:12px;font-weight:normal" fill="#00ff00" stroke="#00ff00" stroke-width="0.12" >2.999993kHz</text>
<text x="0" y="0" transform="translate(1815.00,624.70) scale(1,0.9)" text-anchor="end" style="font-family:'Liberation Mono', monospace;font-size:12px;font-weight:normal" fill="#101010" stroke="#101010" stroke-width="0.12" >73.79901kHz</text>
<text x="0" y="0" transform="translate(1814.00,623.70) scale(1,0.9)" text-anchor="end" style="font-family:'Liberation Mono', monospace;font-size:12px;font-weight:normal" fill="#00ff00" stroke="#00ff00" stroke-width="0.12" >73.79901kHz</text>
<text x="1731.00" y="637.00" text-anchor="start" style="font-family:'Liberation Sans', sans-serif;font-size:10.4px;font-weight:normal" fill="#101010" >Вторая амплитуд</text>
<text x="1730.00" y="636.00" text-anchor="start" style="font-family:'Liberation Sans', sans-serif;font-size:10.4px;font-weight:normal" fill="#00ffff" >Вторая амплитуд</text>
<text x="0" y="0" transform="translate(1815.00,651.70) scale(1,0.9)" text-anchor="end" style="font-family:'Liberation Mono', monospace;font-size:12px;font-weight:normal" fill="#101010" stroke="#101010" stroke-width="0.12" >- 51.137dB</text>
<text x="0" y="0" transform="translate(1814.00,650.70) scale(1,0.9)" text-anchor="end" style="font-family:'Liberation Mono', monospace;font-size:12px;font-weight:normal" fill="#00ff00" stroke="#00ff00" stroke-width="0.12" >- 51.137dB</text>
<text x="0" y="0" transform="translate(1815.00,665.70) scale(1,0.9)" text-anchor="end" style="font-family:'Liberation Mono', monospace;font-size:12px;font-weight:normal" fill="#101010" stroke="#101010" stroke-width="0.12" >- 94.312dB</text>
<text x="0" y="0" transform="translate(1814.00,664.70) scale(1,0.9)" text-anchor="end" style="font-family:'Liberation Mono', monospace;font-size:12px;font-weight:normal" fill="#00ff00" stroke="#00ff00" stroke-width="0.12" >- 94.312dB</text>
<text x="1731.00" y="678.00" text-anchor="start" style="font-family:'Liberation Sans', sans-serif;font-size:10.4px;font-weight:normal" fill="#101010" >Two Tones SINAD</text>
<text x="1730.00" y="677.00" text-anchor="start" style="font-family:'Liberation Sans', sans-serif;font-size:10.4px;font-weight:normal" fill="#00ffff" >Two Tones SINAD</text>
<text x="0" y="0" transform="translate(1815.00,692.70) scale(1,0.9)" text-anchor="end" style="font-family:'Liberation Mono', monospace;font-size:12px;font-weight:normal" fill="#101010" stroke="#101010" stroke-width="0.12" >+ 46.38dB</text>
<text x="0" y="0" transform="translate(1814.00,691.70) scale(1,0.9)" text-anchor="end" style="font-family:'Liberation Mono', monospace;font-size:12px;font-weight:normal" fill="#00ff00" stroke="#00ff00" stroke-width="0.12" >+ 46.38dB</text>
<text x="0" y="0" transform="translate(1815.00,706.70) scale(1,0.9)" text-anchor="end" style="font-family:'Liberation Mono', monospace;font-size:12px;font-weight:normal" fill="#101010" stroke="#101010" stroke-width="0.12" >+  7.15dB</text>
<text x="0" y="0" transform="translate(1814.00,705.70) scale(1,0.9)" text-anchor="end" style="font-family:'Liberation Mono', monospace;font-size:12px;font-weight:normal" fill="#00ff00" stroke="#00ff00" stroke-width="0.12" >+  7.15dB</text>
<rect x="1833" y="9" width="20" height="20" fill="#000"/>
<rect x="1834.5" y="10.5" width="17" height="17" fill="none" stroke="#00a000" stroke-width="1"/>
<path d="M1840.5,11 v16 M1846.5,11 v16 M1835,19.5 h16" stroke="#008000" stroke-width="1" stroke-dasharray="1 1"/>
<path d="M1835,22 L1839,18 L1841,13 L1843,24 L1846,16 L1850,19" stroke="#fff" stroke-width="1.3" fill="none"/>
<rect x="1876" y="24" width="7" height="1.6" fill="#101010"/><rect x="1875" y="23" width="7" height="1.6" fill="#ffff00"/>
<rect x="1889" y="14" width="6" height="12" fill="none" stroke="#101010" stroke-width="1.6"/><rect x="1888" y="13" width="6" height="12" fill="none" stroke="#ffff00" stroke-width="1.6"/>
<text x="1900.00" y="24.00" text-anchor="start" style="font-family:'Liberation Sans', sans-serif;font-size:15px;font-weight:bold" fill="#101010" transform="translate(1899,23) skewX(-12) translate(-1899,-23)">X</text>
<text x="1899.00" y="23.00" text-anchor="start" style="font-family:'Liberation Sans', sans-serif;font-size:15px;font-weight:bold" fill="#ffff00" transform="translate(1899,23) skewX(-12) translate(-1899,-23)">X</text>
<text x="1834.00" y="43.00" text-anchor="start" style="font-family:'Liberation Sans', sans-serif;font-size:13px;font-weight:normal" fill="#101010" >Меню</text>
<text x="1833.00" y="42.00" text-anchor="start" style="font-family:'Liberation Sans', sans-serif;font-size:13px;font-weight:normal" fill="#ffff00" >Меню</text>
<text x="1904.00" y="43.00" text-anchor="start" style="font-family:'Liberation Sans', sans-serif;font-size:13px;font-weight:normal" fill="#101010" >?</text>
<text x="1903.00" y="42.00" text-anchor="start" style="font-family:'Liberation Sans', sans-serif;font-size:13px;font-weight:normal" fill="#ffff00" >?</text>
<text x="1853.50" y="60.50" text-anchor="start" style="font-family:'Liberation Mono', monospace;font-size:12.5px;font-weight:normal" fill="#101010" letter-spacing="0.8">3.03</text>
<text x="1852.50" y="59.50" text-anchor="start" style="font-family:'Liberation Mono', monospace;font-size:12.5px;font-weight:normal" fill="#40e0ff" letter-spacing="0.8">3.03</text>
<text x="1888.00" y="60.50" text-anchor="start" style="font-family:'Liberation Mono', monospace;font-size:12.5px;font-weight:normal" fill="#101010" letter-spacing="-0.5">ms</text>
<text x="1887.00" y="59.50" text-anchor="start" style="font-family:'Liberation Mono', monospace;font-size:12.5px;font-weight:normal" fill="#40e0ff" letter-spacing="-0.5">ms</text>
<text x="1853.50" y="77.00" text-anchor="start" style="font-family:'Liberation Mono', monospace;font-size:12.5px;font-weight:normal" fill="#101010" letter-spacing="0.8">85.2</text>
<text x="1852.50" y="76.00" text-anchor="start" style="font-family:'Liberation Mono', monospace;font-size:12.5px;font-weight:normal" fill="#ff6060" letter-spacing="0.8">85.2</text>
<text x="1888.00" y="77.00" text-anchor="start" style="font-family:'Liberation Mono', monospace;font-size:12.5px;font-weight:normal" fill="#101010" letter-spacing="-0.5">ms</text>
<text x="1887.00" y="76.00" text-anchor="start" style="font-family:'Liberation Mono', monospace;font-size:12.5px;font-weight:normal" fill="#ff6060" letter-spacing="-0.5">ms</text>
<text x="1837.00" y="95.00" text-anchor="start" style="font-family:'Liberation Sans', sans-serif;font-size:13px;font-weight:normal" fill="#101010" >Рекордер</text>
<text x="1836.00" y="94.00" text-anchor="start" style="font-family:'Liberation Sans', sans-serif;font-size:13px;font-weight:normal" fill="#ffff00" >Рекордер</text>
<text x="1839.00" y="112.50" text-anchor="start" style="font-family:'Liberation Sans', sans-serif;font-size:13px;font-weight:normal" fill="#101010" >Генератор°</text>
<text x="1838.00" y="111.50" text-anchor="start" style="font-family:'Liberation Sans', sans-serif;font-size:13px;font-weight:normal" fill="#ffff00" >Генератор°</text>
<text x="1834.00" y="129.50" text-anchor="start" style="font-family:'Liberation Sans', sans-serif;font-size:13px;font-weight:normal" fill="#101010" >Мультиметр</text>
<text x="1833.00" y="128.50" text-anchor="start" style="font-family:'Liberation Sans', sans-serif;font-size:13px;font-weight:normal" fill="#ffff00" >Мультиметр</text>
<rect x="1833" y="132" width="78" height="2" fill="#f0f0f0"/>
<rect x="1833" y="169" width="78" height="2" fill="#f0f0f0"/>
<rect x="1833" y="188" width="78" height="2" fill="#f0f0f0"/>
<rect x="1833" y="225" width="78" height="2" fill="#f0f0f0"/>
<text x="1872.00" y="148.00" text-anchor="middle" style="font-family:'Liberation Sans', sans-serif;font-size:13px;font-weight:normal" fill="#101010" >Осциллогр</text>
<text x="1871.00" y="147.00" text-anchor="middle" style="font-family:'Liberation Sans', sans-serif;font-size:13px;font-weight:normal" fill="#ffff00" >Осциллогр</text>
<text x="1868.00" y="166.50" text-anchor="middle" style="font-family:'Liberation Sans', sans-serif;font-size:13px;font-weight:normal" fill="#101010" >Left</text>
<text x="1867.00" y="165.50" text-anchor="middle" style="font-family:'Liberation Sans', sans-serif;font-size:13px;font-weight:normal" fill="#ffff00" >Left</text>
<text x="1903.00" y="166.50" text-anchor="start" style="font-family:'Liberation Sans', sans-serif;font-size:13px;font-weight:normal" fill="#101010" >&gt;</text>
<text x="1902.00" y="165.50" text-anchor="start" style="font-family:'Liberation Sans', sans-serif;font-size:13px;font-weight:normal" fill="#ffff00" >&gt;</text>
<text x="1870.00" y="185.50" text-anchor="middle" style="font-family:'Liberation Sans', sans-serif;font-size:13px;font-weight:normal" fill="#101010" >Right</text>
<text x="1869.00" y="184.50" text-anchor="middle" style="font-family:'Liberation Sans', sans-serif;font-size:13px;font-weight:normal" fill="#ffff00" >Right</text>
<text x="1903.00" y="185.50" text-anchor="start" style="font-family:'Liberation Sans', sans-serif;font-size:13px;font-weight:normal" fill="#101010" >&gt;</text>
<text x="1902.00" y="184.50" text-anchor="start" style="font-family:'Liberation Sans', sans-serif;font-size:13px;font-weight:normal" fill="#ffff00" >&gt;</text>
<text x="1834.00" y="205.00" text-anchor="start" style="font-family:'Liberation Sans', sans-serif;font-size:13px;font-weight:normal" fill="#101010" >Задерж</text>
<text x="1833.00" y="204.00" text-anchor="start" style="font-family:'Liberation Sans', sans-serif;font-size:13px;font-weight:normal" fill="#ffff00" >Задерж</text>
<text x="1911.00" y="205.00" text-anchor="end" style="font-family:'Liberation Sans', sans-serif;font-size:13px;font-weight:normal" fill="#101010" >R–L</text>
<text x="1910.00" y="204.00" text-anchor="end" style="font-family:'Liberation Sans', sans-serif;font-size:13px;font-weight:normal" fill="#ffff00" >R–L</text>
<text x="1835.00" y="222.00" text-anchor="start" style="font-family:'Liberation Sans', sans-serif;font-size:13px;font-weight:normal" fill="#101010" >+</text>
<text x="1834.00" y="221.00" text-anchor="start" style="font-family:'Liberation Sans', sans-serif;font-size:13px;font-weight:normal" fill="#00ff00" >+</text>
<text x="1898.00" y="222.00" text-anchor="end" style="font-family:'Liberation Sans', sans-serif;font-size:13px;font-weight:normal" fill="#101010" >0</text>
<text x="1897.00" y="221.00" text-anchor="end" style="font-family:'Liberation Sans', sans-serif;font-size:13px;font-weight:normal" fill="#00ff00" >0</text>
<text x="1872.00" y="242.00" text-anchor="middle" style="font-family:'Liberation Sans', sans-serif;font-size:13px;font-weight:normal" fill="#101010" >С п е к т р ы</text>
<text x="1871.00" y="241.00" text-anchor="middle" style="font-family:'Liberation Sans', sans-serif;font-size:13px;font-weight:normal" fill="#ffff00" >С п е к т р ы</text>
<text x="1870.00" y="260.50" text-anchor="middle" style="font-family:'Liberation Sans', sans-serif;font-size:13px;font-weight:normal" fill="#101010" >L , R</text>
<text x="1869.00" y="259.50" text-anchor="middle" style="font-family:'Liberation Sans', sans-serif;font-size:13px;font-weight:normal" fill="#ffff00" >L , R</text>
<text x="1903.00" y="260.50" text-anchor="start" style="font-family:'Liberation Sans', sans-serif;font-size:13px;font-weight:normal" fill="#101010" >&gt;</text>
<text x="1902.00" y="259.50" text-anchor="start" style="font-family:'Liberation Sans', sans-serif;font-size:13px;font-weight:normal" fill="#ffff00" >&gt;</text>
<text x="1872.00" y="278.50" text-anchor="middle" style="font-family:'Liberation Sans', sans-serif;font-size:13px;font-weight:normal" fill="#101010" >3 – D</text>
<text x="1871.00" y="277.50" text-anchor="middle" style="font-family:'Liberation Sans', sans-serif;font-size:13px;font-weight:normal" fill="#ffff00" >3 – D</text>
<text x="1872.00" y="295.50" text-anchor="middle" style="font-family:'Liberation Sans', sans-serif;font-size:12.5px;font-weight:normal" fill="#101010" letter-spacing="-0.3">Откр.вх.&gt;0&lt;</text>
<text x="1871.00" y="294.50" text-anchor="middle" style="font-family:'Liberation Sans', sans-serif;font-size:12.5px;font-weight:normal" fill="#ffff00" letter-spacing="-0.3">Откр.вх.&gt;0&lt;</text>
<text x="1872.00" y="312.00" text-anchor="middle" style="font-family:'Liberation Mono', monospace;font-size:12.5px;font-weight:normal" fill="#101010" letter-spacing="0.6">100.0 ms</text>
<text x="1871.00" y="311.00" text-anchor="middle" style="font-family:'Liberation Mono', monospace;font-size:12.5px;font-weight:normal" fill="#00ff00" letter-spacing="0.6">100.0 ms</text>
<text x="1872.00" y="330.50" text-anchor="middle" style="font-family:'Liberation Sans', sans-serif;font-size:13px;font-weight:normal" fill="#101010" >Синхро</text>
<text x="1871.00" y="329.50" text-anchor="middle" style="font-family:'Liberation Sans', sans-serif;font-size:13px;font-weight:normal" fill="#ffff00" >Синхро</text>
<text x="1835.00" y="347.50" text-anchor="start" style="font-family:'Liberation Mono', monospace;font-size:12.5px;font-weight:normal" fill="#101010" letter-spacing="1">+ 0</text>
<text x="1834.00" y="346.50" text-anchor="start" style="font-family:'Liberation Mono', monospace;font-size:12.5px;font-weight:normal" fill="#00ff00" letter-spacing="1">+ 0</text>
<text x="1909.00" y="347.50" text-anchor="end" style="font-family:'Liberation Mono', monospace;font-size:12.5px;font-weight:normal" fill="#101010" >канал</text>
<text x="1908.00" y="346.50" text-anchor="end" style="font-family:'Liberation Mono', monospace;font-size:12.5px;font-weight:normal" fill="#00ff00" >канал</text>
<text x="1835.00" y="365.00" text-anchor="start" style="font-family:'Liberation Mono', monospace;font-size:12.5px;font-weight:normal" fill="#101010" letter-spacing="0.7">+ 0.00 %</text>
<text x="1834.00" y="364.00" text-anchor="start" style="font-family:'Liberation Mono', monospace;font-size:12.5px;font-weight:normal" fill="#00b000" letter-spacing="0.7">+ 0.00 %</text>
<text x="1872.00" y="382.50" text-anchor="middle" style="font-family:'Liberation Sans', sans-serif;font-size:13px;font-weight:normal" fill="#101010" >Текущее</text>
<text x="1871.00" y="381.50" text-anchor="middle" style="font-family:'Liberation Sans', sans-serif;font-size:13px;font-weight:normal" fill="#ffff00" >Текущее</text>
<text x="1838.00" y="400.00" text-anchor="start" style="font-family:'Liberation Sans', sans-serif;font-size:13px;font-weight:normal" fill="#101010" >Лин</text>
<text x="1837.00" y="399.00" text-anchor="start" style="font-family:'Liberation Sans', sans-serif;font-size:13px;font-weight:normal" fill="#00ff00" >Лин</text>
<text x="1907.00" y="400.00" text-anchor="end" style="font-family:'Liberation Mono', monospace;font-size:12.5px;font-weight:normal" fill="#101010" >1</text>
<text x="1906.00" y="399.00" text-anchor="end" style="font-family:'Liberation Mono', monospace;font-size:12.5px;font-weight:normal" fill="#00ff00" >1</text>
<text x="1839.00" y="418.50" text-anchor="start" style="font-family:'Liberation Sans', sans-serif;font-size:13px;font-weight:normal" fill="#101010" >Окт</text>
<text x="1838.00" y="417.50" text-anchor="start" style="font-family:'Liberation Sans', sans-serif;font-size:13px;font-weight:normal" fill="#00ff00" >Окт</text>
<text x="1907.00" y="418.50" text-anchor="end" style="font-family:'Liberation Mono', monospace;font-size:12.5px;font-weight:normal" fill="#101010" letter-spacing="0.8">1/24</text>
<text x="1906.00" y="417.50" text-anchor="end" style="font-family:'Liberation Mono', monospace;font-size:12.5px;font-weight:normal" fill="#00c000" letter-spacing="0.8">1/24</text>
<text x="1841.00" y="435.50" text-anchor="start" style="font-family:'Liberation Sans', sans-serif;font-size:13px;font-weight:normal" fill="#101010" >Взвесить</text>
<text x="1840.00" y="434.50" text-anchor="start" style="font-family:'Liberation Sans', sans-serif;font-size:13px;font-weight:normal" fill="#ffff00" >Взвесить</text>
<text x="1903.00" y="435.50" text-anchor="start" style="font-family:'Liberation Sans', sans-serif;font-size:13px;font-weight:normal" fill="#101010" >&gt;</text>
<text x="1902.00" y="434.50" text-anchor="start" style="font-family:'Liberation Sans', sans-serif;font-size:13px;font-weight:normal" fill="#ffff00" >&gt;</text>
<text x="1837.00" y="453.50" text-anchor="start" style="font-family:'Liberation Sans', sans-serif;font-size:12.5px;font-weight:normal" fill="#101010" letter-spacing="-0.2">Rife-Vinc 6</text>
<text x="1836.00" y="452.50" text-anchor="start" style="font-family:'Liberation Sans', sans-serif;font-size:12.5px;font-weight:normal" fill="#ffff00" letter-spacing="-0.2">Rife-Vinc 6</text>
<text x="1903.00" y="453.50" text-anchor="start" style="font-family:'Liberation Sans', sans-serif;font-size:13px;font-weight:normal" fill="#101010" >&gt;</text>
<text x="1902.00" y="452.50" text-anchor="start" style="font-family:'Liberation Sans', sans-serif;font-size:13px;font-weight:normal" fill="#ffff00" >&gt;</text>
<text x="1839.00" y="472.50" text-anchor="start" style="font-family:'Liberation Sans', sans-serif;font-size:13px;font-weight:normal" fill="#101010" >СПМ</text>
<text x="1838.00" y="471.50" text-anchor="start" style="font-family:'Liberation Sans', sans-serif;font-size:13px;font-weight:normal" fill="#ffff00" >СПМ</text>
<clipPath id="cpc"><rect x="1832" y="8" width="80" height="540"/></clipPath><circle cx="1910.5" cy="465" r="5.5" fill="#800080" stroke="#000" stroke-width="1" clip-path="url(#cpc)"/>
<text x="1838.00" y="495.50" text-anchor="start" style="font-family:'Liberation Sans', sans-serif;font-size:13px;font-weight:normal" fill="#101010" >БПФ</text>
<text x="1837.00" y="494.50" text-anchor="start" style="font-family:'Liberation Sans', sans-serif;font-size:13px;font-weight:normal" fill="#00ff00" >БПФ</text>
<text x="1874.00" y="495.50" text-anchor="start" style="font-family:'Liberation Sans', sans-serif;font-size:13px;font-weight:normal" fill="#101010" >°</text>
<text x="1873.00" y="494.50" text-anchor="start" style="font-family:'Liberation Sans', sans-serif;font-size:13px;font-weight:normal" fill="#00ff00" >°</text>
<text x="1884.00" y="495.50" text-anchor="start" style="font-family:'Liberation Mono', monospace;font-size:12.5px;font-weight:normal" fill="#101010" >2</text>
<text x="1883.00" y="494.50" text-anchor="start" style="font-family:'Liberation Mono', monospace;font-size:12.5px;font-weight:normal" fill="#00ff00" >2</text>
<text x="1892.00" y="488.00" text-anchor="start" style="font-family:'Liberation Mono', monospace;font-size:12px;font-weight:normal" fill="#101010" >16</text>
<text x="1891.00" y="487.00" text-anchor="start" style="font-family:'Liberation Mono', monospace;font-size:12px;font-weight:normal" fill="#00ff00" >16</text>
<text x="1872.00" y="513.00" text-anchor="middle" style="font-family:'Liberation Mono', monospace;font-size:12px;font-weight:normal" fill="#101010" letter-spacing="0.9">192.0 kHz</text>
<text x="1871.00" y="512.00" text-anchor="middle" style="font-family:'Liberation Mono', monospace;font-size:12px;font-weight:normal" fill="#00ff00" letter-spacing="0.9">192.0 kHz</text>
<text x="1872.00" y="534.00" text-anchor="middle" style="font-family:'Liberation Sans', sans-serif;font-size:22px;font-weight:normal" fill="#101010" stroke="#101010" stroke-width="0.4" letter-spacing="0.6">Старт</text>
<text x="1871.00" y="533.00" text-anchor="middle" style="font-family:'Liberation Sans', sans-serif;font-size:22px;font-weight:normal" fill="#ffff00" stroke="#ffff00" stroke-width="0.4" letter-spacing="0.6">Старт</text>
<circle cx="1852" cy="542.5" r="3.3" fill="#800000" stroke="#200000" stroke-width="0.8"/>
<circle cx="1851.0" cy="541.5" r="1" fill="#ff4040"/>
<circle cx="1891" cy="542.5" r="3.3" fill="#800000" stroke="#200000" stroke-width="0.8"/>
<circle cx="1890.0" cy="541.5" r="1" fill="#ff4040"/>
<defs><radialGradient id="orb" cx="50%" cy="35%" r="65%"><stop offset="0" stop-color="#a8d0f0"/><stop offset="0.45" stop-color="#2a70b8"/><stop offset="0.8" stop-color="#0a3a78"/><stop offset="1" stop-color="#30c0f0"/></radialGradient><linearGradient id="opera" x1="0" y1="0" x2="1" y2="1"><stop offset="0" stop-color="#ff1b2d"/><stop offset="1" stop-color="#a70014"/></linearGradient><linearGradient id="fold" x1="0" y1="0" x2="0" y2="1"><stop offset="0" stop-color="#fbe9a0"/><stop offset="1" stop-color="#e8c860"/></linearGradient></defs>
<circle cx="33" cy="1056" r="21" fill="url(#orb)" stroke="#9ab" stroke-width="1"/>
<path d="M23,1046 q5,-3 9,0 l-2,9 q-4,-3 -9,0 z" fill="#f25022"/>
<path d="M34,1046 q5,2 9,-1 l-2,9 q-4,3 -9,1 z" fill="#7fba00"/>
<path d="M21,1057 q5,-3 9,0 l-2,9 q-4,-3 -9,0 z" fill="#00a4ef"/>
<path d="M32,1057 q5,2 9,-1 l-2,9 q-4,3 -9,1 z" fill="#ffb900"/>
<path fill-rule="evenodd" fill="url(#opera)" d="M105,1036.5 a19,19.3 0 1,0 0.01,0 Z M105,1041.5 a10,14 0 1,0 0.01,0 Z"/>
<path d="M157,1042 h11 l2,2 h24 v10 h-37 z" fill="#e8cc78"/>
<rect x="160" y="1038" width="14" height="5" fill="#fff" stroke="#d8c080" stroke-width="0.5"/><rect x="161" y="1038.5" width="2" height="2.5" fill="#20a020"/>
<rect x="168" y="1041" width="14" height="5" fill="#fff" stroke="#d8c080" stroke-width="0.5"/><rect x="169" y="1041.5" width="2" height="2.5" fill="#e02020"/>
<rect x="178" y="1043.5" width="14" height="5" fill="#fff" stroke="#d8c080" stroke-width="0.5"/><rect x="179" y="1044" width="2" height="2.5" fill="#2060e0"/>
<rect x="156" y="1045" width="39" height="28" rx="1.5" fill="url(#fold)"/>
<path d="M161,1073 v-11 q0,-3 3,-3 h23 q3,0 3,3 v11 h-6 v-4 h-17 v4 z" fill="#7cc4e8"/>
<rect x="169" y="1068" width="13" height="4" fill="#e8c860"/>
<circle cx="245" cy="1055.5" r="20" fill="#fff"/>
<defs><linearGradient id="yr" x1="0" y1="0" x2="1" y2="0"><stop offset="0" stop-color="#ff3030"/><stop offset="1" stop-color="#ff55e0"/></linearGradient></defs>
<path d="M233.5,1045.5 L245,1057" stroke="#ff6420" stroke-width="5"/>
<path d="M245,1057 L256.5,1045.5" stroke="url(#yr)" stroke-width="5"/>
<path d="M245,1055 L245,1071.5" stroke="#ff3a22" stroke-width="4.5"/>
<rect x="301.5" y="1037.5" width="28" height="37" rx="2" fill="#a8d0ee" stroke="#5a92c0"/>
<rect x="304" y="1040" width="23" height="13" fill="#5a8ab0"/><rect x="305" y="1041" width="21" height="11" fill="#eaf4fc"/><rect x="305" y="1041" width="21" height="1.5" fill="#f0a030"/>
<text x="323.50" y="1050.50" text-anchor="middle" style="font-family:'Liberation Sans', sans-serif;font-size:8px;font-weight:normal" fill="#2a4a90" >0</text>
<rect x="304.5" y="1056.0" width="2.6" height="2.6" fill="#5a9ac8"/>
<rect x="308.3" y="1056.0" width="2.6" height="2.6" fill="#5a9ac8"/>
<rect x="312.1" y="1056.0" width="2.6" height="2.6" fill="#5a9ac8"/>
<rect x="315.9" y="1056.0" width="2.6" height="2.6" fill="#5a9ac8"/>
<rect x="319.7" y="1056.0" width="2.6" height="2.6" fill="#5a9ac8"/>
<rect x="323.5" y="1056.0" width="2.6" height="2.6" fill="#5a9ac8"/>
<rect x="304.5" y="1060.2" width="2.6" height="2.6" fill="#f4f8fc"/>
<rect x="308.3" y="1060.2" width="2.6" height="2.6" fill="#f4f8fc"/>
<rect x="312.1" y="1060.2" width="2.6" height="2.6" fill="#f4f8fc"/>
<rect x="315.9" y="1060.2" width="2.6" height="2.6" fill="#5a9ac8"/>
<rect x="319.7" y="1060.2" width="2.6" height="2.6" fill="#5a9ac8"/>
<rect x="323.5" y="1060.2" width="2.6" height="2.6" fill="#5a9ac8"/>
<rect x="304.5" y="1064.4" width="2.6" height="2.6" fill="#f4f8fc"/>
<rect x="308.3" y="1064.4" width="2.6" height="2.6" fill="#f4f8fc"/>
<rect x="312.1" y="1064.4" width="2.6" height="2.6" fill="#f4f8fc"/>
<rect x="315.9" y="1064.4" width="2.6" height="2.6" fill="#5a9ac8"/>
<rect x="319.7" y="1064.4" width="2.6" height="2.6" fill="#5a9ac8"/>
<rect x="323.5" y="1064.4" width="2.6" height="2.6" fill="#5a9ac8"/>
<rect x="304.5" y="1068.6" width="2.6" height="2.6" fill="#f4f8fc"/>
<rect x="308.3" y="1068.6" width="2.6" height="2.6" fill="#f4f8fc"/>
<rect x="312.1" y="1068.6" width="2.6" height="2.6" fill="#f4f8fc"/>
<rect x="315.9" y="1068.6" width="2.6" height="2.6" fill="#5a9ac8"/>
<rect x="319.7" y="1068.6" width="2.6" height="2.6" fill="#5a9ac8"/>
<rect x="323.5" y="1068.6" width="2.6" height="2.6" fill="#5a9ac8"/>
<rect x="323.3" y="1064.4" width="2.6" height="7" fill="#f09020"/>
<path d="M369.5,1036.5 h24.5 l7,7.5 v31.5 h-31.5 z" fill="#fff" stroke="#555" stroke-width="1"/>
<path d="M394.0,1036.5 v7.5 h7 z" fill="#e0e0e0" stroke="#888" stroke-width="0.6"/>
<rect x="374.5" y="1048.5" width="21" height="18" fill="#ecebe4" stroke="#333" stroke-width="1"/>
<rect x="375.0" y="1049" width="20" height="2.5" fill="#0a1ab0"/>
<circle cx="379.0" cy="1055.0" r="1.9" fill="#e00"/>
<circle cx="385.3" cy="1055.0" r="1.9" fill="#0aa"/>
<circle cx="391.6" cy="1055.0" r="1.9" fill="#00e"/>
<circle cx="379.0" cy="1061.0" r="1.9" fill="#d0d"/>
<circle cx="385.3" cy="1061.0" r="1.9" fill="#aa0"/>
<circle cx="391.6" cy="1061.0" r="1.9" fill="#e00"/>
<path d="M439.5,1036.5 h24.5 l7,7.5 v31.5 h-31.5 z" fill="#fff" stroke="#555" stroke-width="1"/>
<path d="M464.0,1036.5 v7.5 h7 z" fill="#e0e0e0" stroke="#888" stroke-width="0.6"/>
<rect x="444.5" y="1048.5" width="21" height="18" fill="#ecebe4" stroke="#333" stroke-width="1"/>
<rect x="445.0" y="1049" width="20" height="2.5" fill="#0a1ab0"/>
<circle cx="449.0" cy="1055.0" r="1.9" fill="#e00"/>
<circle cx="455.3" cy="1055.0" r="1.9" fill="#0aa"/>
<circle cx="461.6" cy="1055.0" r="1.9" fill="#00e"/>
<circle cx="449.0" cy="1061.0" r="1.9" fill="#d0d"/>
<circle cx="455.3" cy="1061.0" r="1.9" fill="#aa0"/>
<circle cx="461.6" cy="1061.0" r="1.9" fill="#e00"/>
<text x="1652.00" y="1059.00" text-anchor="start" style="font-family:'Liberation Sans', sans-serif;font-size:12.5px;font-weight:normal" fill="#f4f4f4" >RU</text>
<path d="M1693.5,1059 L1698,1054 L1702.5,1059 Z" fill="#f0f0f0"/>
<path d="M1722,1053 h4 l6,-5 v18 l-6,-5 h-4 z" fill="#e8e8e8" stroke="#888" stroke-width="0.5"/>
<path d="M1735,1053 q2,3 0,6 M1738,1051 q3,5 0,10" stroke="#ddd" stroke-width="1.2" fill="none"/>
<path d="M1753,1048 v19" stroke="#ddd" stroke-width="1.2"/><path d="M1753.5,1048 h8 l2,2 h6 v7 h-8 l-2,-2 h-6 z" fill="#e8e8e8"/>
<circle cx="1765" cy="1062" r="4.5" fill="#e02020"/><path d="M1762.5,1059.5 l5,5 M1767.5,1059.5 l-5,5" stroke="#fff" stroke-width="1.3"/>
<rect x="1788" y="1051" width="13" height="11" fill="#1a2a3a" stroke="#ccc" stroke-width="1"/><path d="M1791,1064 h8" stroke="#ccc" stroke-width="1.5"/>
<rect x="1783" y="1048" width="5" height="8" fill="none" stroke="#ccc"/><path d="M1785.5,1056 v8 h4" stroke="#ccc" fill="none"/>
<text x="1857.00" y="1051.50" text-anchor="middle" style="font-family:'Liberation Sans', sans-serif;font-size:14px;font-weight:normal" fill="#f4f4f4" >16:18</text>
<text x="1857.00" y="1073.50" text-anchor="middle" style="font-family:'Liberation Sans', sans-serif;font-size:14px;font-weight:normal" fill="#f4f4f4" >15.01.2026</text>
</svg></body></html>
